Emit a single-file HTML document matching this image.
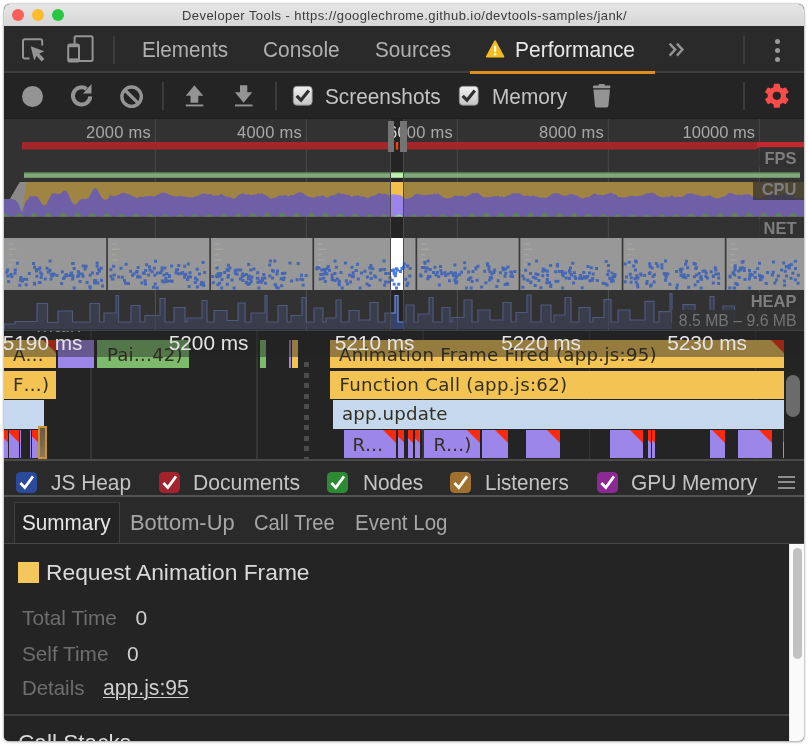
<!DOCTYPE html>
<html><head><meta charset="utf-8"><title>Developer Tools</title>
<style>
html,body{margin:0;padding:0}
body{width:808px;height:746px;background:#fff;overflow:hidden;position:relative}
#win{position:absolute;left:4px;top:4px;width:800px;height:737px;border-radius:6px 6px 5px 5px;overflow:hidden;background:#242424;box-shadow:0 0 2px rgba(0,0,0,.45),0 1px 3px rgba(0,0,0,.25)}
#pg{position:absolute;left:-4px;top:-4px;width:808px;height:746px;will-change:transform}
svg{overflow:visible}
</style></head><body>
<div id="win"><div id="pg">
<div style="position:absolute;left:4px;top:4px;width:800px;height:22px;background:linear-gradient(#e6e6e6,#d6d6d6)"></div>
<div style="position:absolute;left:12px;top:9px;width:12px;height:12px;border-radius:50%;background:#fc5f57"></div>
<div style="position:absolute;left:32px;top:9px;width:12px;height:12px;border-radius:50%;background:#fdbc2e"></div>
<div style="position:absolute;left:52px;top:9px;width:12px;height:12px;border-radius:50%;background:#28c840"></div>
<span id="title" style="position:absolute;left:182px;top:9px;font:13px/1 'Liberation Sans',sans-serif;color:#3c3c3c;white-space:pre;letter-spacing:0.43px">Developer Tools - https://googlechrome.github.io/devtools-samples/jank/</span>
<div style="position:absolute;left:4px;top:26px;width:800px;height:46px;background:#2a2a2a"></div>
<div style="position:absolute;left:4px;top:71px;width:800px;height:2px;background:#3d3d3d"></div>
<span id="t_el" style="position:absolute;left:142px;top:39px;font:22px/1 'Liberation Sans',sans-serif;color:#b0b0b0;white-space:pre;transform:scaleX(0.9382);transform-origin:0 0">Elements</span>
<span id="t_co" style="position:absolute;left:263px;top:39px;font:22px/1 'Liberation Sans',sans-serif;color:#b0b0b0;white-space:pre;transform:scaleX(0.9496);transform-origin:0 0">Console</span>
<span id="t_so" style="position:absolute;left:375px;top:39px;font:22px/1 'Liberation Sans',sans-serif;color:#b0b0b0;white-space:pre;transform:scaleX(0.9421);transform-origin:0 0">Sources</span>
<span id="t_pe" style="position:absolute;left:515px;top:39px;font:22px/1 'Liberation Sans',sans-serif;color:#e8e8e8;white-space:pre;transform:scaleX(0.9530);transform-origin:0 0">Performance</span>
<div style="position:absolute;left:113px;top:36px;width:1.5px;height:28px;background:#3c3c3c"></div>
<div style="position:absolute;left:743px;top:36px;width:1.5px;height:28px;background:#3c3c3c"></div>
<div style="position:absolute;left:774.5px;top:38.5px;width:5.0px;height:5.0px;border-radius:50%;background:#9a9a9a"></div>
<div style="position:absolute;left:774.5px;top:47.5px;width:5.0px;height:5.0px;border-radius:50%;background:#9a9a9a"></div>
<div style="position:absolute;left:774.5px;top:56.5px;width:5.0px;height:5.0px;border-radius:50%;background:#9a9a9a"></div>
<svg style="position:absolute;left:18px;top:32px" width="32" height="34" viewBox="0 0 32 34"><path d="M11.5 26.4 H7 a2 2 0 0 1 -2 -2 V9.2 a2 2 0 0 1 2 -2 H22.2 a2 2 0 0 1 2 2 V13.5" fill="none" stroke="#949494" stroke-width="2"/>
<path d="M12.7 14.2 L26.3 19.3 L21.3 21.6 L26.4 27 L23.6 29.6 L18.6 24.1 L16.2 28.6 Z" fill="#949494"/></svg>
<svg style="position:absolute;left:64px;top:32px" width="34" height="34" viewBox="0 0 34 34"><rect x="10.6" y="4.2" width="18" height="24.8" rx="1.5" fill="none" stroke="#949494" stroke-width="2"/>
<rect x="4.2" y="12.6" width="10.8" height="16.9" rx="1.8" fill="#2a2a2a" stroke="#949494" stroke-width="2"/>
<rect x="4.2" y="12.6" width="10.8" height="2.6" fill="#949494"/><rect x="4.2" y="26.4" width="10.8" height="3" fill="#949494"/></svg>
<svg style="position:absolute;left:484px;top:38px" width="22" height="22" viewBox="0 0 22 22"><path d="M11.1 3.2 L19.4 18.6 H2.8 Z" fill="#f5bd1c" stroke="#f5bd1c" stroke-width="1.8" stroke-linejoin="round"/>
<rect x="10.1" y="7.6" width="2.1" height="6.4" rx="1" fill="#fff"/><circle cx="11.15" cy="16.2" r="1.25" fill="#fff"/></svg>
<svg style="position:absolute;left:666px;top:40px" width="20" height="20" viewBox="0 0 20 20"><path d="M3.6 3.6 L9.2 9.6 L3.6 15.6 M10.9 3.6 L16.5 9.6 L10.9 15.6" fill="none" stroke="#949494" stroke-width="2.4"/></svg>
<div style="position:absolute;left:4px;top:73px;width:800px;height:46px;background:#242424"></div>
<div style="position:absolute;left:4px;top:118px;width:800px;height:1.2px;background:#1e1e1e"></div>
<div style="position:absolute;left:469.5px;top:70.6px;width:185.0px;height:3.4px;background:#dd8e1e"></div>
<div style="position:absolute;left:162px;top:82px;width:1.5px;height:28px;background:#3c3c3c"></div>
<div style="position:absolute;left:275px;top:82px;width:1.5px;height:28px;background:#3c3c3c"></div>
<div style="position:absolute;left:743px;top:82px;width:1.5px;height:28px;background:#3c3c3c"></div>
<div style="position:absolute;left:21.8px;top:85.5px;width:21.4px;height:21.4px;border-radius:50%;background:#949494"></div>
<svg style="position:absolute;left:0;top:0" width="808" height="130" viewBox="0 0 808 130"><path d="M90.24 96.35 A8.65 8.65 0 1 1 86.56 88.81" fill="none" stroke="#949494" stroke-width="4"/><path d="M91.5 84 V93.5 H83 Z" fill="#949494"/></svg>
<svg style="position:absolute;left:118px;top:83px" width="28" height="28" viewBox="0 0 28 28"><circle cx="13.6" cy="13.7" r="9.7" fill="none" stroke="#949494" stroke-width="3.4"/><path d="M6.8 7 L20.4 20.4" stroke="#949494" stroke-width="3.4"/></svg>
<svg style="position:absolute;left:182px;top:82px" width="26" height="28" viewBox="0 0 26 28"><path d="M12.4 3.2 L21.3 13.8 H16.3 V20.7 H8.5 V13.8 H3.8 Z" fill="#949494"/><rect x="3.8" y="22.5" width="17.5" height="1.9" fill="#949494"/></svg>
<svg style="position:absolute;left:231px;top:82px" width="26" height="28" viewBox="0 0 26 28"><path d="M12.6 20.7 L21.3 10.3 H16.3 V3.2 H9 V10.3 H4 Z" fill="#949494"/><rect x="4" y="22.5" width="17.5" height="1.9" fill="#949494"/></svg>
<svg style="position:absolute;left:293px;top:86px" width="20" height="20" viewBox="0 0 20 20"><defs><linearGradient id="g293" x1="0" y1="0" x2="0" y2="1"><stop offset="0" stop-color="#f2f2f2"/><stop offset="1" stop-color="#c4c4c4"/></linearGradient></defs><rect x="0.3" y="0.3" width="18.9" height="18.9" rx="3.6" fill="url(#g293)" stroke="#8a8a8a" stroke-width="0.8"/><path d="M3.6 9.8 L8 14.2 L15.8 4.4" fill="none" stroke="#303030" stroke-width="3.2"/></svg>
<svg style="position:absolute;left:459.2px;top:86px" width="20" height="20" viewBox="0 0 20 20"><defs><linearGradient id="g459" x1="0" y1="0" x2="0" y2="1"><stop offset="0" stop-color="#f2f2f2"/><stop offset="1" stop-color="#c4c4c4"/></linearGradient></defs><rect x="0.3" y="0.3" width="18.9" height="18.9" rx="3.6" fill="url(#g459)" stroke="#8a8a8a" stroke-width="0.8"/><path d="M3.6 9.8 L8 14.2 L15.8 4.4" fill="none" stroke="#303030" stroke-width="3.2"/></svg>
<span id="c_ss" style="position:absolute;left:325px;top:86px;font:22px/1 'Liberation Sans',sans-serif;color:#c4c4c4;white-space:pre;transform:scaleX(0.9455);transform-origin:0 0">Screenshots</span>
<span id="c_me" style="position:absolute;left:491.6px;top:86px;font:22px/1 'Liberation Sans',sans-serif;color:#c4c4c4;white-space:pre;transform:scaleX(0.9457);transform-origin:0 0">Memory</span>
<svg style="position:absolute;left:590px;top:82px" width="24" height="28" viewBox="0 0 24 28"><path d="M3.4 7.4 H20 L18.4 24 a1.6 1.6 0 0 1 -1.6 1.4 H6.6 a1.6 1.6 0 0 1 -1.6 -1.4 Z" fill="#949494"/><rect x="3" y="3.6" width="17.4" height="2.6" rx="1" fill="#949494"/><rect x="8.6" y="2" width="6.2" height="2.4" rx="1" fill="#949494"/></svg>
<svg style="position:absolute;left:762px;top:81px" width="30" height="30" viewBox="0 0 30 30"><path d="M12.26 6.58 L12.52 3.53 L17.08 3.53 L17.34 6.58 L20.64 8.49 L23.42 7.19 L25.70 11.14 L23.19 12.89 L23.19 16.71 L25.70 18.46 L23.42 22.41 L20.64 21.11 L17.34 23.02 L17.08 26.07 L12.52 26.07 L12.26 23.02 L8.96 21.11 L6.18 22.41 L3.90 18.46 L6.41 16.71 L6.41 12.89 L3.90 11.14 L6.18 7.19 L8.96 8.49 Z" fill="#fa4c4c" stroke="#fa4c4c" stroke-width="1.5" stroke-linejoin="round"/><circle cx="14.8" cy="14.8" r="4.1" fill="#242424"/></svg>
<svg style="position:absolute;left:0;top:0" width="808" height="746" viewBox="0 0 808 746"><rect x="0" y="119" width="808" height="211" fill="#323232"/><rect x="154.8" y="119" width="1.2" height="211" fill="#444444"/><rect x="305.8" y="119" width="1.2" height="211" fill="#444444"/><rect x="456.8" y="119" width="1.2" height="211" fill="#444444"/><rect x="607.8" y="119" width="1.2" height="211" fill="#444444"/><rect x="758.8" y="119" width="1.2" height="211" fill="#444444"/><path d="M22 142H760V147L756 149.6H22Z" fill="#a3262b"/><rect x="757" y="142" width="48" height="5.2" fill="#c4282e"/><rect x="24" y="172.7" width="776" height="5.1" fill="#80a87a"/><rect x="24" y="172.5" width="776" height="1.1" fill="#5f8f5a"/><polygon points="4,216.6 4,199.0 6,199.0 8,199.0 10,199.0 12,195.6 14,192.2 16,188.8 18,185.4 20,182.0 22,182.0 24,182.0 26,182.0 28,182.0 30,182.0 32,182.0 34,182.0 36,182.0 38,182.0 40,182.0 42,182.0 44,182.0 46,182.0 48,182.0 50,182.0 52,182.0 54,182.0 56,182.0 58,182.0 60,182.0 62,182.0 64,182.0 66,182.0 68,182.0 70,182.0 72,182.0 74,182.0 76,182.0 78,182.0 80,182.0 82,182.0 84,182.0 86,182.0 88,182.0 90,182.0 92,182.0 94,182.0 96,182.0 98,182.0 100,182.0 102,182.0 104,182.0 106,182.0 108,182.0 110,182.0 112,182.0 114,182.0 116,182.0 118,182.0 120,182.0 122,182.0 124,182.0 126,182.0 128,182.0 130,182.0 132,182.0 134,182.0 136,182.0 138,182.0 140,182.0 142,182.0 144,182.0 146,182.0 148,182.0 150,182.0 152,182.0 154,182.0 156,182.0 158,182.0 160,182.0 162,182.0 164,182.0 166,182.0 168,182.0 170,182.0 172,182.0 174,182.0 176,182.0 178,182.0 180,182.0 182,182.0 184,182.0 186,182.0 188,182.0 190,182.0 192,182.0 194,182.0 196,182.0 198,182.0 200,182.0 202,182.0 204,182.0 206,182.0 208,182.0 210,182.0 212,182.0 214,182.0 216,182.0 218,182.0 220,182.0 222,182.0 224,182.0 226,182.0 228,182.0 230,182.0 232,182.0 234,182.0 236,182.0 238,182.0 240,182.0 242,182.0 244,182.0 246,182.0 248,182.0 250,182.0 252,182.0 254,182.0 256,182.0 258,182.0 260,182.0 262,182.0 264,182.0 266,182.0 268,182.0 270,182.0 272,182.0 274,182.0 276,182.0 278,182.0 280,182.0 282,182.0 284,182.0 286,182.0 288,182.0 290,182.0 292,182.0 294,182.0 296,182.0 298,182.0 300,182.0 302,182.0 304,182.0 306,182.0 308,182.0 310,182.0 312,182.0 314,182.0 316,182.0 318,182.0 320,182.0 322,182.0 324,182.0 326,182.0 328,182.0 330,182.0 332,182.0 334,182.0 336,182.0 338,182.0 340,182.0 342,182.0 344,182.0 346,182.0 348,182.0 350,182.0 352,182.0 354,182.0 356,182.0 358,182.0 360,182.0 362,182.0 364,182.0 366,182.0 368,182.0 370,182.0 372,182.0 374,182.0 376,182.0 378,182.0 380,182.0 382,182.0 384,182.0 386,182.0 388,182.0 390,182.0 392,182.0 394,182.0 396,182.0 398,182.0 400,182.0 402,182.0 404,182.0 406,182.0 408,182.0 410,182.0 412,182.0 414,182.0 416,182.0 418,182.0 420,182.0 422,182.0 424,182.0 426,182.0 428,182.0 430,182.0 432,182.0 434,182.0 436,182.0 438,182.0 440,182.0 442,182.0 444,182.0 446,182.0 448,182.0 450,182.0 452,182.0 454,182.0 456,182.0 458,182.0 460,182.0 462,182.0 464,182.0 466,182.0 468,182.0 470,182.0 472,182.0 474,182.0 476,182.0 478,182.0 480,182.0 482,182.0 484,182.0 486,182.0 488,182.0 490,182.0 492,182.0 494,182.0 496,182.0 498,182.0 500,182.0 502,182.0 504,182.0 506,182.0 508,182.0 510,182.0 512,182.0 514,182.0 516,182.0 518,182.0 520,182.0 522,182.0 524,182.0 526,182.0 528,182.0 530,182.0 532,182.0 534,182.0 536,182.0 538,182.0 540,182.0 542,182.0 544,182.0 546,182.0 548,182.0 550,182.0 552,182.0 554,182.0 556,182.0 558,182.0 560,182.0 562,182.0 564,182.0 566,182.0 568,182.0 570,182.0 572,182.0 574,182.0 576,182.0 578,182.0 580,182.0 582,182.0 584,182.0 586,182.0 588,182.0 590,182.0 592,182.0 594,182.0 596,182.0 598,182.0 600,182.0 602,182.0 604,182.0 606,182.0 608,182.0 610,182.0 612,182.0 614,182.0 616,182.0 618,182.0 620,182.0 622,182.0 624,182.0 626,182.0 628,182.0 630,182.0 632,182.0 634,182.0 636,182.0 638,182.0 640,182.0 642,182.0 644,182.0 646,182.0 648,182.0 650,182.0 652,182.0 654,182.0 656,182.0 658,182.0 660,182.0 662,182.0 664,182.0 666,182.0 668,182.0 670,182.0 672,182.0 674,182.0 676,182.0 678,182.0 680,182.0 682,182.0 684,182.0 686,182.0 688,182.0 690,182.0 692,182.0 694,182.0 696,182.0 698,182.0 700,182.0 702,182.0 704,182.0 706,182.0 708,182.0 710,182.0 712,182.0 714,182.0 716,182.0 718,182.0 720,182.0 722,182.0 724,182.0 726,182.0 728,182.0 730,182.0 732,182.0 734,182.0 736,182.0 738,182.0 740,182.0 742,182.0 744,182.0 746,182.0 748,182.0 750,182.0 752,182.0 754,182.0 756,182.0 758,182.0 760,182.0 762,182.0 764,182.0 766,182.0 768,182.0 770,182.0 772,182.0 774,182.0 776,182.0 778,182.0 780,182.0 782,182.0 784,182.0 786,182.0 788,182.0 790,182.0 792,182.0 794,182.0 796,182.0 798,182.0 800,182.0 802,182.0 804,182.0 804,216.6" fill="#a08542"/><polygon points="10,199.5 14,192 18,185 20,182 26.5,182 24.5,196 22.5,213 20,208 16,200.5" fill="#8a8a8a"/><polygon points="4,216.6 4,199.0 6,199.0 8,199.0 10,199.0 12,199.0 14,199.5 16,200.5 18,203.0 20,208.0 22,213.0 24,206.0 26,201.0 28,199.5 30,195.6 32,196.5 34,196.2 36,196.1 38,197.6 40,200.7 42,204.1 44,205.8 46,204.7 48,201.2 50,196.9 52,193.8 54,192.9 56,193.5 58,194.3 60,193.8 62,192.2 64,190.6 66,190.8 68,193.5 70,198.0 72,202.3 74,204.6 76,204.2 78,201.9 80,199.7 82,198.7 84,199.0 86,199.3 88,198.3 90,195.3 92,191.4 94,188.5 96,188.3 98,190.8 100,194.7 102,198.1 104,199.7 106,199.6 108,199.0 110,195.2 112,195.6 114,196.4 116,195.4 118,194.9 120,194.2 122,192.8 124,193.0 126,193.3 128,194.3 130,194.4 132,195.9 134,196.4 136,198.0 138,197.7 140,196.2 142,197.1 144,196.7 146,196.1 148,196.3 150,196.0 152,196.0 154,196.7 156,195.4 158,194.6 160,193.6 162,192.4 164,192.7 166,192.8 168,194.2 170,194.7 172,195.8 174,196.3 176,196.7 178,196.2 180,195.6 182,196.5 184,196.6 186,196.7 188,197.2 190,197.2 192,197.3 194,197.2 196,196.1 198,196.0 200,194.3 202,194.1 204,192.9 206,194.0 208,194.4 210,193.8 212,194.7 214,196.1 216,195.3 218,195.8 220,194.6 222,194.1 224,195.5 226,196.6 228,196.8 230,197.3 232,198.0 234,198.7 236,197.6 238,195.5 240,194.6 242,193.6 244,193.3 246,194.7 248,194.1 250,195.1 252,195.0 254,194.4 256,194.7 258,193.2 260,193.8 262,193.3 264,194.5 266,195.3 268,196.6 270,198.6 272,198.6 274,197.6 276,197.8 278,195.8 280,195.4 282,195.8 284,195.4 286,194.8 288,196.5 290,195.3 292,195.0 294,195.1 296,193.5 298,192.8 300,192.2 302,192.6 304,194.3 306,194.9 308,196.6 310,197.0 312,197.3 314,197.9 316,196.6 318,196.3 320,196.5 322,195.5 324,195.8 326,197.4 328,197.4 330,196.3 332,195.4 334,195.2 336,194.5 338,192.5 340,193.4 342,193.7 344,194.1 346,194.8 348,195.1 350,195.5 352,197.0 354,195.6 356,196.0 358,195.2 360,196.3 362,196.6 364,196.8 366,197.2 368,198.2 370,196.7 372,196.1 374,195.4 376,194.7 378,193.6 380,192.9 382,194.2 384,193.7 386,194.1 388,194.9 390,195.2 392,194.4 394,194.2 396,194.4 398,194.9 400,194.9 402,196.2 404,198.0 406,198.9 408,198.5 410,198.1 412,197.0 414,195.2 416,194.1 418,193.5 420,194.9 422,194.8 424,195.6 426,194.4 428,195.3 430,194.6 432,194.5 434,193.3 436,194.3 438,193.3 440,195.0 442,196.4 444,197.8 446,198.3 448,198.4 450,198.1 452,197.6 454,195.8 456,195.8 458,195.9 460,196.0 462,195.6 464,196.4 466,196.4 468,195.4 470,194.6 472,193.3 474,193.1 476,193.0 478,192.7 480,194.6 482,196.4 484,197.2 486,197.5 488,197.1 490,197.3 492,196.5 494,195.9 496,196.4 498,195.5 500,197.0 502,196.2 504,197.2 506,196.6 508,195.3 510,194.9 512,193.5 514,193.1 516,193.5 518,192.9 520,193.4 522,194.8 524,196.1 526,195.7 528,195.6 530,196.4 532,195.8 534,195.5 536,196.6 538,196.4 540,197.7 542,197.4 544,197.8 546,197.8 548,196.9 550,195.6 552,193.8 554,193.5 556,193.1 558,193.2 560,194.4 562,195.5 564,195.8 566,195.5 568,195.6 570,194.1 572,193.9 574,194.8 576,195.3 578,196.2 580,197.5 582,198.4 584,198.2 586,197.3 588,197.2 590,196.3 592,194.7 594,193.7 596,193.7 598,195.3 600,194.4 602,195.5 604,195.1 606,194.1 608,194.3 610,192.7 612,192.9 614,194.0 616,194.4 618,196.9 620,197.0 622,197.4 624,197.2 626,197.6 628,196.5 630,196.1 632,195.7 634,195.9 636,196.4 638,196.3 640,195.6 642,195.7 644,194.6 646,193.4 648,193.2 650,193.2 652,192.4 654,193.2 656,194.4 658,196.1 660,196.7 662,197.3 664,197.5 666,196.5 668,196.7 670,196.6 672,195.3 674,197.1 676,197.2 678,196.6 680,197.0 682,196.7 684,196.1 686,194.1 688,193.4 690,193.4 692,193.4 694,194.3 696,194.4 698,195.6 700,195.4 702,196.4 704,196.4 706,195.8 708,195.7 710,195.1 712,196.8 714,197.7 716,198.4 718,198.1 720,198.3 722,196.8 724,196.6 726,195.4 728,193.6 730,192.8 732,193.4 734,194.1 736,195.1 738,195.1 740,194.4 742,195.5 744,193.9 746,194.8 748,193.9 750,194.7 752,196.3 754,196.4 756,197.3 758,198.3 760,198.5 762,197.9 764,196.6 766,196.1 768,194.7 770,195.2 772,194.0 774,194.5 776,195.3 778,194.9 780,195.2 782,194.4 784,193.6 786,193.8 788,193.6 790,194.0 792,195.2 794,197.2 796,198.2 798,197.5 800,198.3 802,197.9 804,196.4 804,216.6" fill="#6f5fa6"/><polygon points="4,216.6 4,213.3 6,213.6 8,215.8 10,216.5 12,216.5 14,216.5 16,215.6 18,213.3 20,213.0 22,214.8 24,216.5 26,216.5 28,216.5 30,216.5 32,213.5 34,212.5 36,213.8 38,216.5 40,216.5 42,216.5 44,216.5 46,214.1 48,212.4 50,213.1 52,216.2 54,216.5 56,216.5 58,216.5 60,215.1 62,212.6 64,212.6 66,214.9 68,216.5 70,216.5 72,216.5 74,216.5 76,213.2 78,212.5 80,214.1 82,216.5 84,216.5 86,216.5 88,216.5 90,214.1 92,212.7 94,213.6 96,216.5 98,216.5 100,216.5 102,216.5 104,215.0 106,213.2 108,213.4 110,215.5 112,216.5 114,216.5 116,216.5 118,216.1 120,213.9 122,213.6 124,214.9 126,216.5 128,216.5 130,216.5 132,216.5 134,214.6 136,213.9 138,214.6 140,216.5 142,216.5 144,216.5 146,216.5 148,215.3 150,214.3 152,214.5 154,216.1 156,216.5 158,216.5 160,216.5 162,216.0 164,214.6 166,214.5 168,215.5 170,216.5 172,216.5 174,216.5 176,216.5 178,214.9 180,214.4 182,215.1 184,216.5 186,216.5 188,216.5 190,216.5 192,215.2 194,214.3 196,214.6 198,216.3 200,216.5 202,216.5 204,216.5 206,215.7 208,214.2 210,214.1 212,215.5 214,216.5 216,216.5 218,216.5 220,216.5 222,214.2 224,213.6 226,214.7 228,216.5 230,216.5 232,216.5 234,216.5 236,214.4 238,213.2 240,213.9 242,216.5 244,216.5 246,216.5 248,216.5 250,215.0 252,213.0 254,213.1 256,215.4 258,216.5 260,216.5 262,216.5 264,215.9 266,213.1 268,212.6 270,214.3 272,216.5 274,216.5 276,216.5 278,216.5 280,213.6 282,212.3 284,213.5 286,216.5 288,216.5 290,216.5 292,216.5 294,214.4 296,212.4 298,212.9 300,215.7 302,216.5 304,216.5 306,216.5 308,215.5 310,212.9 312,212.6 314,214.7 316,216.5 318,216.5 320,216.5 322,216.5 324,213.6 326,212.8 328,214.0 330,216.5 332,216.5 334,216.5 336,216.5 338,214.5 340,213.2 342,213.7 344,216.2 346,216.5 348,216.5 350,216.5 352,215.5 354,213.7 356,213.8 358,215.4 360,216.5 362,216.5 364,216.5 366,216.5 368,214.4 370,213.9 372,215.0 374,216.5 376,216.5 378,216.5 380,216.5 382,215.0 384,214.2 386,214.7 388,216.5 390,216.5 392,216.5 394,216.5 396,215.6 398,214.5 400,214.6 402,215.9 404,216.5 406,216.5 408,216.5 410,216.2 412,214.7 414,214.4 416,215.4 418,216.5 420,216.5 422,216.5 424,216.5 426,214.9 428,214.2 430,214.8 432,216.5 434,216.5 436,216.5 438,216.5 440,215.3 442,214.0 444,214.3 446,216.0 448,216.5 450,216.5 452,216.5 454,215.8 456,213.9 458,213.7 460,215.1 462,216.5 464,216.5 466,216.5 468,216.5 470,214.0 472,213.2 474,214.2 476,216.5 478,216.5 480,216.5 482,216.5 484,214.4 486,212.8 488,213.4 490,216.2 492,216.5 494,216.5 496,216.5 498,215.2 500,212.8 502,212.7 504,215.0 506,216.5 508,216.5 510,216.5 512,216.5 514,213.2 516,212.4 518,214.0 520,216.5 522,216.5 524,216.5 526,216.5 528,213.8 530,212.3 532,213.3 534,216.5 536,216.5 538,216.5 540,216.5 542,214.8 544,212.7 546,212.9 548,215.3 550,216.5 552,216.5 554,216.5 556,216.0 558,213.3 560,212.9 562,214.5 564,216.5 566,216.5 568,216.5 570,216.5 572,214.1 574,213.1 576,214.1 578,216.5 580,216.5 582,216.5 584,216.5 586,215.0 588,213.6 590,214.0 592,215.9 594,216.5 596,216.5 598,216.5 600,215.9 602,214.2 604,214.1 606,215.4 608,216.5 610,216.5 612,216.5 614,216.5 616,214.8 618,214.2 620,215.0 622,216.5 624,216.5 626,216.5 628,216.5 630,215.3 632,214.4 634,214.8 636,216.3 638,216.5 640,216.5 642,216.5 644,215.8 646,214.6 648,214.5 650,215.7 652,216.5 654,216.5 656,216.5 658,216.5 660,214.7 662,214.2 664,215.1 666,216.5 668,216.5 670,216.5 672,216.5 674,214.9 676,213.9 678,214.5 680,216.5 682,216.5 684,216.5 686,216.5 688,215.3 690,213.7 692,213.8 694,215.6 696,216.5 698,216.5 700,216.5 702,216.0 704,213.7 706,213.2 708,214.7 710,216.5 712,216.5 714,216.5 716,216.5 718,213.9 720,212.7 722,213.8 724,216.5 726,216.5 728,216.5 730,216.5 732,214.5 734,212.6 736,213.0 738,215.7 740,216.5 742,216.5 744,216.5 746,215.5 748,212.8 750,212.5 752,214.6 754,216.5 756,216.5 758,216.5 760,216.5 762,213.4 764,212.3 766,213.7 768,216.5 770,216.5 772,216.5 774,216.5 776,214.2 778,212.5 780,213.2 782,216.2 784,216.5 786,216.5 788,216.5 790,215.2 792,213.1 794,213.1 796,215.1 798,216.5 800,216.5 802,216.5 804,216.5 804,216.6" fill="#5f8456"/><rect x="4" y="238" width="800" height="52" fill="#989898"/><path d="M8.6 243.2h5v1.4h-5zM8.6 248.5h8v1.4h-8zM8.6 253.9h4v1.4h-4zM8.6 259.2h7v1.4h-7zM8.6 264.6h3v1.4h-3zM111.7 243.2h5v1.4h-5zM111.7 248.5h8v1.4h-8zM111.7 253.9h4v1.4h-4zM111.7 259.2h7v1.4h-7zM111.7 264.6h3v1.4h-3zM214.8 243.2h5v1.4h-5zM214.8 248.5h8v1.4h-8zM214.8 253.9h4v1.4h-4zM214.8 259.2h7v1.4h-7zM214.8 264.6h3v1.4h-3zM317.9 243.2h5v1.4h-5zM317.9 248.5h8v1.4h-8zM317.9 253.9h4v1.4h-4zM317.9 259.2h7v1.4h-7zM317.9 264.6h3v1.4h-3zM421.0 243.2h5v1.4h-5zM421.0 248.5h8v1.4h-8zM421.0 253.9h4v1.4h-4zM421.0 259.2h7v1.4h-7zM421.0 264.6h3v1.4h-3zM524.1 243.2h5v1.4h-5zM524.1 248.5h8v1.4h-8zM524.1 253.9h4v1.4h-4zM524.1 259.2h7v1.4h-7zM524.1 264.6h3v1.4h-3zM627.2 243.2h5v1.4h-5zM627.2 248.5h8v1.4h-8zM627.2 253.9h4v1.4h-4zM627.2 259.2h7v1.4h-7zM627.2 264.6h3v1.4h-3zM730.3 243.2h5v1.4h-5zM730.3 248.5h8v1.4h-8zM730.3 253.9h4v1.4h-4zM730.3 259.2h7v1.4h-7zM730.3 264.6h3v1.4h-3z" fill="#a6a69e"/><path d="M64.9 272.9h3v3h-3zM95.6 261.4h3v3h-3zM76.1 275.0h3v3h-3zM49.7 272.7h3v3h-3zM95.7 264.8h3v3h-3zM15.9 261.7h3v3h-3zM50.1 273.7h3v3h-3zM60.2 282.0h3v3h-3zM6.3 274.6h3v3h-3zM93.1 278.9h3v3h-3zM78.6 280.0h3v3h-3zM18.3 283.7h3v3h-3zM64.3 273.8h3v3h-3zM88.7 273.8h3v3h-3zM25.1 277.7h3v3h-3zM88.8 286.5h3v3h-3zM32.8 281.7h3v3h-3zM70.1 271.5h3v3h-3zM24.7 283.2h3v3h-3zM97.9 269.7h3v3h-3zM90.9 271.6h3v3h-3zM20.9 279.6h3v3h-3zM19.0 278.8h3v3h-3zM63.0 275.8h3v3h-3zM5.3 270.8h3v3h-3zM34.8 267.9h3v3h-3zM83.7 267.6h3v3h-3zM51.2 274.2h3v3h-3zM72.7 286.5h3v3h-3zM7.2 280.0h3v3h-3zM77.1 274.2h3v3h-3zM80.7 272.4h3v3h-3zM40.2 272.7h3v3h-3zM9.5 273.1h3v3h-3zM22.4 277.8h3v3h-3zM77.6 272.2h3v3h-3zM94.3 279.3h3v3h-3zM39.1 271.3h3v3h-3zM55.4 274.0h3v3h-3zM76.9 270.3h3v3h-3zM81.6 274.7h3v3h-3zM95.9 272.1h3v3h-3zM13.8 268.5h3v3h-3zM93.2 281.4h3v3h-3zM37.7 281.1h3v3h-3zM35.0 269.6h3v3h-3zM35.4 274.7h3v3h-3zM19.3 276.0h3v3h-3zM71.2 277.5h3v3h-3zM9.7 273.4h3v3h-3zM99.8 266.7h3v3h-3zM27.8 272.0h3v3h-3zM62.1 277.0h3v3h-3zM45.5 266.8h3v3h-3zM10.4 275.0h3v3h-3zM52.4 272.6h3v3h-3zM85.6 281.0h3v3h-3zM96.3 281.6h3v3h-3zM65.6 274.3h3v3h-3zM46.8 270.4h3v3h-3zM19.3 276.7h3v3h-3zM48.5 268.8h3v3h-3zM101.0 284.6h3v3h-3zM48.6 259.5h3v3h-3zM51.9 272.5h3v3h-3zM33.0 265.8h3v3h-3zM43.8 277.5h3v3h-3zM100.0 278.8h3v3h-3zM97.2 267.9h3v3h-3zM37.5 267.8h3v3h-3zM13.6 271.8h3v3h-3zM88.4 285.3h3v3h-3zM39.7 276.1h3v3h-3zM71.8 262.1h3v3h-3zM68.8 273.9h3v3h-3zM72.7 267.0h3v3h-3zM32.0 261.9h3v3h-3zM71.4 274.5h3v3h-3zM33.2 282.8h3v3h-3zM60.8 270.2h3v3h-3zM6.1 268.6h3v3h-3zM69.5 272.0h3v3h-3zM49.5 277.5h3v3h-3zM81.7 264.5h3v3h-3zM38.4 266.6h3v3h-3zM84.6 264.7h3v3h-3zM38.6 281.1h3v3h-3zM71.1 262.0h3v3h-3zM201.9 281.4h3v3h-3zM159.0 271.3h3v3h-3zM124.1 281.8h3v3h-3zM154.0 259.8h3v3h-3zM174.5 271.4h3v3h-3zM124.6 262.7h3v3h-3zM183.1 264.7h3v3h-3zM148.5 268.6h3v3h-3zM168.0 275.0h3v3h-3zM177.3 263.9h3v3h-3zM110.8 277.4h3v3h-3zM170.6 279.7h3v3h-3zM129.1 269.7h3v3h-3zM112.1 264.7h3v3h-3zM153.4 273.8h3v3h-3zM120.9 275.7h3v3h-3zM138.6 275.4h3v3h-3zM111.5 277.6h3v3h-3zM152.8 266.7h3v3h-3zM164.8 279.9h3v3h-3zM131.0 273.7h3v3h-3zM147.1 273.4h3v3h-3zM134.9 270.7h3v3h-3zM188.0 275.3h3v3h-3zM144.0 282.6h3v3h-3zM117.2 275.6h3v3h-3zM160.5 268.7h3v3h-3zM200.2 281.1h3v3h-3zM186.8 262.6h3v3h-3zM169.8 279.6h3v3h-3zM143.6 279.2h3v3h-3zM162.3 280.6h3v3h-3zM200.1 282.6h3v3h-3zM141.8 271.6h3v3h-3zM194.0 276.7h3v3h-3zM162.5 273.5h3v3h-3zM167.2 279.6h3v3h-3zM193.8 280.9h3v3h-3zM144.2 269.1h3v3h-3zM136.1 275.5h3v3h-3zM201.6 260.9h3v3h-3zM195.9 285.4h3v3h-3zM165.4 272.3h3v3h-3zM155.8 286.5h3v3h-3zM148.0 265.3h3v3h-3zM155.4 286.5h3v3h-3zM135.6 270.1h3v3h-3zM167.8 274.0h3v3h-3zM150.7 270.3h3v3h-3zM187.6 284.9h3v3h-3zM109.4 268.2h3v3h-3zM198.0 272.4h3v3h-3zM183.2 273.6h3v3h-3zM123.0 278.9h3v3h-3zM203.1 271.0h3v3h-3zM153.7 282.5h3v3h-3zM170.1 264.6h3v3h-3zM119.5 266.7h3v3h-3zM181.2 270.9h3v3h-3zM140.4 281.5h3v3h-3zM136.6 266.0h3v3h-3zM142.8 272.1h3v3h-3zM179.7 271.9h3v3h-3zM132.4 272.5h3v3h-3zM151.9 285.8h3v3h-3zM160.5 266.4h3v3h-3zM109.5 274.8h3v3h-3zM163.4 266.4h3v3h-3zM176.2 268.2h3v3h-3zM195.7 267.7h3v3h-3zM145.1 263.2h3v3h-3zM127.0 281.9h3v3h-3zM136.6 274.7h3v3h-3zM188.5 271.3h3v3h-3zM174.9 268.4h3v3h-3zM183.1 275.8h3v3h-3zM195.6 278.3h3v3h-3zM160.9 279.6h3v3h-3zM155.9 271.6h3v3h-3zM164.4 276.9h3v3h-3zM186.1 278.0h3v3h-3zM186.9 275.5h3v3h-3zM184.2 272.7h3v3h-3zM177.5 272.2h3v3h-3zM202.2 284.1h3v3h-3zM112.8 273.4h3v3h-3zM189.0 275.4h3v3h-3zM199.6 283.1h3v3h-3zM279.7 277.3h3v3h-3zM299.4 277.7h3v3h-3zM225.6 268.1h3v3h-3zM226.7 269.0h3v3h-3zM271.0 276.6h3v3h-3zM247.6 274.4h3v3h-3zM218.1 281.8h3v3h-3zM282.5 276.6h3v3h-3zM295.6 278.3h3v3h-3zM241.4 278.9h3v3h-3zM268.9 259.5h3v3h-3zM247.2 274.6h3v3h-3zM216.6 272.2h3v3h-3zM271.9 269.8h3v3h-3zM259.8 280.8h3v3h-3zM270.9 268.9h3v3h-3zM236.5 268.6h3v3h-3zM283.3 271.8h3v3h-3zM260.9 276.8h3v3h-3zM246.9 277.2h3v3h-3zM282.0 278.1h3v3h-3zM274.1 283.2h3v3h-3zM219.4 272.0h3v3h-3zM223.2 270.9h3v3h-3zM268.3 274.5h3v3h-3zM257.4 286.5h3v3h-3zM242.3 274.0h3v3h-3zM280.9 271.9h3v3h-3zM216.4 283.3h3v3h-3zM276.7 286.5h3v3h-3zM232.6 286.5h3v3h-3zM275.1 285.7h3v3h-3zM290.1 279.6h3v3h-3zM245.2 280.8h3v3h-3zM233.8 268.8h3v3h-3zM244.7 281.6h3v3h-3zM248.3 281.9h3v3h-3zM273.5 283.2h3v3h-3zM288.5 261.4h3v3h-3zM260.9 278.9h3v3h-3zM268.2 263.5h3v3h-3zM249.2 268.5h3v3h-3zM220.5 278.0h3v3h-3zM215.0 274.4h3v3h-3zM296.7 262.1h3v3h-3zM211.2 274.9h3v3h-3zM256.4 280.8h3v3h-3zM252.4 267.5h3v3h-3zM255.9 276.7h3v3h-3zM226.5 275.8h3v3h-3zM247.2 263.0h3v3h-3zM225.8 282.7h3v3h-3zM235.6 272.8h3v3h-3zM238.8 277.5h3v3h-3zM233.8 271.8h3v3h-3zM300.0 273.7h3v3h-3zM246.7 283.1h3v3h-3zM276.0 269.6h3v3h-3zM256.5 276.7h3v3h-3zM275.4 272.4h3v3h-3zM239.2 268.5h3v3h-3zM226.9 263.7h3v3h-3zM230.5 278.4h3v3h-3zM218.7 274.3h3v3h-3zM249.7 279.9h3v3h-3zM241.2 272.4h3v3h-3zM256.2 271.2h3v3h-3zM280.2 284.3h3v3h-3zM226.9 274.1h3v3h-3zM301.6 283.6h3v3h-3zM273.3 259.5h3v3h-3zM211.8 281.3h3v3h-3zM217.0 274.8h3v3h-3zM215.5 266.6h3v3h-3zM263.9 281.7h3v3h-3zM244.8 273.0h3v3h-3zM220.2 286.5h3v3h-3zM258.4 279.8h3v3h-3zM301.1 278.3h3v3h-3zM216.0 275.2h3v3h-3zM249.4 278.4h3v3h-3zM250.4 275.4h3v3h-3zM240.6 275.3h3v3h-3zM304.6 274.1h3v3h-3zM228.4 266.6h3v3h-3zM262.3 273.1h3v3h-3zM219.3 272.2h3v3h-3zM263.3 276.5h3v3h-3zM402.8 262.6h3v3h-3zM334.9 265.7h3v3h-3zM316.0 265.9h3v3h-3zM369.2 271.6h3v3h-3zM350.5 265.8h3v3h-3zM402.0 265.8h3v3h-3zM343.9 261.4h3v3h-3zM335.8 277.5h3v3h-3zM325.4 272.4h3v3h-3zM388.5 276.2h3v3h-3zM393.0 272.1h3v3h-3zM322.2 276.8h3v3h-3zM337.8 279.7h3v3h-3zM369.7 277.1h3v3h-3zM337.9 283.3h3v3h-3zM318.9 277.5h3v3h-3zM333.5 272.0h3v3h-3zM323.8 279.9h3v3h-3zM354.7 269.1h3v3h-3zM367.7 284.0h3v3h-3zM400.4 267.0h3v3h-3zM369.5 264.0h3v3h-3zM356.8 277.5h3v3h-3zM406.1 264.4h3v3h-3zM384.3 271.9h3v3h-3zM392.3 268.4h3v3h-3zM351.0 275.2h3v3h-3zM330.6 275.3h3v3h-3zM339.5 271.0h3v3h-3zM320.4 268.5h3v3h-3zM387.7 272.0h3v3h-3zM319.2 272.9h3v3h-3zM326.8 265.1h3v3h-3zM405.5 284.0h3v3h-3zM373.1 274.4h3v3h-3zM349.1 280.6h3v3h-3zM346.0 282.5h3v3h-3zM393.8 274.2h3v3h-3zM384.1 280.4h3v3h-3zM330.8 278.2h3v3h-3zM382.5 259.5h3v3h-3zM390.7 278.8h3v3h-3zM325.7 267.3h3v3h-3zM358.6 286.5h3v3h-3zM356.0 262.7h3v3h-3zM404.3 277.7h3v3h-3zM365.5 282.5h3v3h-3zM324.3 271.8h3v3h-3zM392.6 271.6h3v3h-3zM408.3 274.6h3v3h-3zM317.5 266.6h3v3h-3zM399.0 269.9h3v3h-3zM352.0 274.7h3v3h-3zM333.6 278.9h3v3h-3zM368.3 266.4h3v3h-3zM337.5 282.4h3v3h-3zM348.1 273.7h3v3h-3zM395.0 286.5h3v3h-3zM396.0 268.4h3v3h-3zM328.0 268.8h3v3h-3zM394.2 271.6h3v3h-3zM330.6 273.6h3v3h-3zM323.8 270.6h3v3h-3zM333.5 259.5h3v3h-3zM390.9 268.9h3v3h-3zM397.2 282.7h3v3h-3zM374.2 275.6h3v3h-3zM315.3 267.2h3v3h-3zM363.5 269.8h3v3h-3zM351.7 271.2h3v3h-3zM344.8 279.3h3v3h-3zM351.1 274.5h3v3h-3zM360.1 271.5h3v3h-3zM408.7 266.9h3v3h-3zM392.7 282.8h3v3h-3zM378.7 268.7h3v3h-3zM365.9 275.4h3v3h-3zM371.3 267.3h3v3h-3zM379.6 268.0h3v3h-3zM321.8 272.7h3v3h-3zM322.7 268.0h3v3h-3zM387.3 280.6h3v3h-3zM383.0 268.0h3v3h-3zM340.7 286.5h3v3h-3zM383.1 283.7h3v3h-3zM378.7 278.5h3v3h-3zM406.3 281.8h3v3h-3zM394.9 267.3h3v3h-3zM488.4 269.9h3v3h-3zM467.1 270.5h3v3h-3zM503.5 274.8h3v3h-3zM469.7 286.5h3v3h-3zM455.2 280.3h3v3h-3zM434.5 273.6h3v3h-3zM480.2 285.6h3v3h-3zM476.4 264.7h3v3h-3zM454.6 281.6h3v3h-3zM470.6 280.1h3v3h-3zM486.1 263.5h3v3h-3zM437.8 283.6h3v3h-3zM446.8 272.4h3v3h-3zM503.6 282.9h3v3h-3zM433.5 265.7h3v3h-3zM439.0 264.9h3v3h-3zM423.4 261.8h3v3h-3zM501.8 268.3h3v3h-3zM487.4 267.3h3v3h-3zM468.2 277.1h3v3h-3zM504.3 271.7h3v3h-3zM475.6 278.7h3v3h-3zM510.3 274.2h3v3h-3zM428.5 275.1h3v3h-3zM471.5 270.0h3v3h-3zM435.7 270.9h3v3h-3zM474.5 267.2h3v3h-3zM487.4 265.2h3v3h-3zM423.3 260.7h3v3h-3zM509.4 274.7h3v3h-3zM448.0 279.3h3v3h-3zM506.5 265.6h3v3h-3zM439.4 269.2h3v3h-3zM463.2 261.2h3v3h-3zM427.1 274.9h3v3h-3zM426.3 277.2h3v3h-3zM432.0 271.1h3v3h-3zM490.3 271.4h3v3h-3zM488.2 278.5h3v3h-3zM485.9 262.3h3v3h-3zM506.2 282.7h3v3h-3zM510.1 271.0h3v3h-3zM427.3 275.5h3v3h-3zM437.2 275.0h3v3h-3zM453.4 263.6h3v3h-3zM488.8 276.1h3v3h-3zM425.5 266.5h3v3h-3zM453.5 278.4h3v3h-3zM428.7 268.1h3v3h-3zM483.1 269.7h3v3h-3zM465.0 286.5h3v3h-3zM424.3 269.7h3v3h-3zM490.4 272.5h3v3h-3zM428.6 267.9h3v3h-3zM463.4 266.7h3v3h-3zM505.7 282.3h3v3h-3zM454.1 271.5h3v3h-3zM484.4 281.2h3v3h-3zM493.2 268.4h3v3h-3zM449.8 270.9h3v3h-3zM498.9 271.3h3v3h-3zM457.8 273.2h3v3h-3zM440.3 272.2h3v3h-3zM443.4 271.2h3v3h-3zM426.6 259.5h3v3h-3zM469.4 276.3h3v3h-3zM454.5 276.2h3v3h-3zM451.6 272.3h3v3h-3zM495.3 285.1h3v3h-3zM452.1 273.9h3v3h-3zM419.0 273.5h3v3h-3zM454.2 281.0h3v3h-3zM467.1 278.0h3v3h-3zM511.0 275.1h3v3h-3zM459.9 270.7h3v3h-3zM444.2 274.0h3v3h-3zM509.2 270.4h3v3h-3zM422.5 266.0h3v3h-3zM455.1 274.8h3v3h-3zM474.4 266.4h3v3h-3zM504.1 267.6h3v3h-3zM420.9 265.9h3v3h-3zM419.7 274.4h3v3h-3zM501.4 266.5h3v3h-3zM496.7 279.2h3v3h-3zM513.4 270.1h3v3h-3zM490.1 276.5h3v3h-3zM492.4 271.1h3v3h-3zM561.1 286.5h3v3h-3zM541.3 269.7h3v3h-3zM561.0 272.5h3v3h-3zM548.0 281.1h3v3h-3zM584.6 276.5h3v3h-3zM564.5 276.4h3v3h-3zM527.6 262.8h3v3h-3zM605.6 283.4h3v3h-3zM539.4 286.2h3v3h-3zM612.8 275.0h3v3h-3zM578.1 276.8h3v3h-3zM608.9 277.3h3v3h-3zM610.6 277.8h3v3h-3zM561.7 274.3h3v3h-3zM546.1 273.7h3v3h-3zM595.0 266.9h3v3h-3zM535.1 259.5h3v3h-3zM588.0 271.4h3v3h-3zM529.2 281.0h3v3h-3zM556.5 279.8h3v3h-3zM555.9 264.6h3v3h-3zM613.3 274.8h3v3h-3zM543.7 268.7h3v3h-3zM572.9 271.3h3v3h-3zM590.8 278.7h3v3h-3zM588.3 279.3h3v3h-3zM521.3 274.4h3v3h-3zM569.0 266.5h3v3h-3zM579.2 274.1h3v3h-3zM568.6 271.3h3v3h-3zM524.2 268.8h3v3h-3zM522.6 277.6h3v3h-3zM549.1 264.1h3v3h-3zM609.4 276.6h3v3h-3zM556.1 262.9h3v3h-3zM610.6 271.5h3v3h-3zM611.8 279.2h3v3h-3zM536.5 273.1h3v3h-3zM610.1 280.1h3v3h-3zM591.2 277.0h3v3h-3zM571.3 261.7h3v3h-3zM549.3 283.4h3v3h-3zM573.5 275.3h3v3h-3zM554.2 270.2h3v3h-3zM568.0 269.3h3v3h-3zM564.1 271.6h3v3h-3zM526.2 278.8h3v3h-3zM534.3 276.8h3v3h-3zM613.5 273.0h3v3h-3zM595.8 278.9h3v3h-3zM591.7 272.5h3v3h-3zM580.6 286.2h3v3h-3zM557.8 270.0h3v3h-3zM545.8 269.8h3v3h-3zM604.7 260.1h3v3h-3zM537.5 279.0h3v3h-3zM533.7 284.1h3v3h-3zM574.4 277.1h3v3h-3zM521.4 285.7h3v3h-3zM568.0 276.9h3v3h-3zM604.2 282.3h3v3h-3zM531.8 275.7h3v3h-3zM589.8 266.3h3v3h-3zM541.8 267.5h3v3h-3zM611.7 275.4h3v3h-3zM586.2 275.1h3v3h-3zM529.4 280.4h3v3h-3zM582.9 276.6h3v3h-3zM606.2 273.0h3v3h-3zM582.3 271.0h3v3h-3zM601.6 281.8h3v3h-3zM545.4 281.3h3v3h-3zM549.2 285.0h3v3h-3zM570.1 273.6h3v3h-3zM607.2 269.6h3v3h-3zM541.3 274.3h3v3h-3zM545.8 277.9h3v3h-3zM529.0 272.0h3v3h-3zM554.4 279.8h3v3h-3zM580.2 276.9h3v3h-3zM583.0 275.2h3v3h-3zM567.7 276.8h3v3h-3zM586.5 265.1h3v3h-3zM608.2 276.4h3v3h-3zM534.4 272.6h3v3h-3zM572.0 281.4h3v3h-3zM607.0 264.1h3v3h-3zM560.8 270.1h3v3h-3zM699.0 276.4h3v3h-3zM634.0 268.6h3v3h-3zM648.5 264.6h3v3h-3zM649.0 284.6h3v3h-3zM684.1 262.7h3v3h-3zM634.8 260.4h3v3h-3zM697.6 271.9h3v3h-3zM684.3 276.2h3v3h-3zM704.7 271.6h3v3h-3zM717.0 272.4h3v3h-3zM660.5 266.4h3v3h-3zM648.7 265.3h3v3h-3zM662.8 272.0h3v3h-3zM629.8 276.2h3v3h-3zM692.5 261.9h3v3h-3zM629.6 280.8h3v3h-3zM652.6 280.4h3v3h-3zM699.6 286.5h3v3h-3zM709.7 270.3h3v3h-3zM663.6 273.4h3v3h-3zM645.3 282.1h3v3h-3zM651.5 275.0h3v3h-3zM634.0 259.5h3v3h-3zM714.5 272.4h3v3h-3zM668.4 282.8h3v3h-3zM634.6 280.5h3v3h-3zM675.2 286.5h3v3h-3zM675.8 283.6h3v3h-3zM665.6 272.3h3v3h-3zM717.1 282.0h3v3h-3zM664.7 275.6h3v3h-3zM711.8 281.4h3v3h-3zM660.3 263.3h3v3h-3zM654.9 262.1h3v3h-3zM701.5 269.8h3v3h-3zM628.7 272.8h3v3h-3zM713.8 266.3h3v3h-3zM711.8 275.1h3v3h-3zM678.8 267.9h3v3h-3zM695.1 273.5h3v3h-3zM648.2 262.2h3v3h-3zM681.7 275.6h3v3h-3zM636.5 276.6h3v3h-3zM693.7 283.5h3v3h-3zM633.5 277.1h3v3h-3zM639.7 273.4h3v3h-3zM632.2 264.6h3v3h-3zM706.0 276.6h3v3h-3zM639.3 272.5h3v3h-3zM679.4 270.5h3v3h-3zM647.8 272.1h3v3h-3zM692.9 275.3h3v3h-3zM635.4 274.0h3v3h-3zM680.5 267.4h3v3h-3zM685.0 259.7h3v3h-3zM712.0 274.5h3v3h-3zM650.7 266.5h3v3h-3zM636.4 285.5h3v3h-3zM664.0 259.5h3v3h-3zM635.9 283.0h3v3h-3zM686.6 274.0h3v3h-3zM623.7 262.5h3v3h-3zM714.3 268.4h3v3h-3zM687.2 285.8h3v3h-3zM664.0 278.8h3v3h-3zM656.3 264.8h3v3h-3zM693.9 262.8h3v3h-3zM682.6 273.2h3v3h-3zM700.1 277.8h3v3h-3zM623.7 280.2h3v3h-3zM699.6 275.2h3v3h-3zM627.7 260.7h3v3h-3zM675.0 270.1h3v3h-3zM643.1 274.0h3v3h-3zM717.2 276.5h3v3h-3zM703.3 269.5h3v3h-3zM686.2 266.2h3v3h-3zM645.6 280.0h3v3h-3zM649.9 283.4h3v3h-3zM679.5 274.1h3v3h-3zM695.0 266.2h3v3h-3zM653.0 273.3h3v3h-3zM694.3 267.1h3v3h-3zM696.4 280.1h3v3h-3zM666.3 272.6h3v3h-3zM648.6 271.3h3v3h-3zM704.4 274.9h3v3h-3zM625.0 275.4h3v3h-3zM782.9 279.4h3v3h-3zM758.8 278.2h3v3h-3zM785.6 265.3h3v3h-3zM728.5 274.7h3v3h-3zM785.0 274.5h3v3h-3zM787.9 264.1h3v3h-3zM771.7 270.7h3v3h-3zM772.0 260.5h3v3h-3zM728.2 286.5h3v3h-3zM741.5 259.9h3v3h-3zM731.5 271.8h3v3h-3zM753.8 276.1h3v3h-3zM733.2 273.6h3v3h-3zM758.1 274.0h3v3h-3zM748.7 272.6h3v3h-3zM738.9 266.8h3v3h-3zM796.6 281.7h3v3h-3zM742.6 267.1h3v3h-3zM756.2 266.9h3v3h-3zM728.6 275.6h3v3h-3zM760.1 274.7h3v3h-3zM789.8 263.1h3v3h-3zM776.8 274.6h3v3h-3zM793.9 259.8h3v3h-3zM784.8 264.9h3v3h-3zM775.0 278.5h3v3h-3zM791.4 271.8h3v3h-3zM740.7 266.3h3v3h-3zM750.7 273.5h3v3h-3zM783.1 283.8h3v3h-3zM740.8 260.8h3v3h-3zM753.5 270.8h3v3h-3zM733.6 268.4h3v3h-3zM737.2 269.5h3v3h-3zM747.8 277.4h3v3h-3zM757.9 273.7h3v3h-3zM734.4 282.1h3v3h-3zM796.9 273.8h3v3h-3zM787.8 266.4h3v3h-3zM732.6 286.5h3v3h-3zM737.7 275.9h3v3h-3zM770.8 273.6h3v3h-3zM782.2 261.4h3v3h-3zM759.8 275.2h3v3h-3zM794.0 266.9h3v3h-3zM739.2 268.2h3v3h-3zM758.0 261.7h3v3h-3zM743.5 278.1h3v3h-3zM748.3 274.6h3v3h-3zM766.1 271.1h3v3h-3zM742.8 268.9h3v3h-3zM733.6 265.6h3v3h-3zM780.2 268.5h3v3h-3zM789.5 276.8h3v3h-3zM783.8 269.8h3v3h-3zM735.8 283.0h3v3h-3zM764.7 282.0h3v3h-3zM793.8 278.3h3v3h-3zM773.3 281.4h3v3h-3zM761.1 275.6h3v3h-3zM759.2 276.7h3v3h-3zM759.6 278.0h3v3h-3zM731.9 271.2h3v3h-3zM748.0 269.0h3v3h-3zM733.4 268.4h3v3h-3zM748.1 286.5h3v3h-3zM733.7 264.2h3v3h-3zM733.1 286.5h3v3h-3z" fill="#4667b4"/><rect x="106.2" y="238" width="1.7" height="52" fill="#3a3a3a"/><rect x="209.3" y="238" width="1.7" height="52" fill="#3a3a3a"/><rect x="312.4" y="238" width="1.7" height="52" fill="#3a3a3a"/><rect x="415.5" y="238" width="1.7" height="52" fill="#3a3a3a"/><rect x="518.6" y="238" width="1.7" height="52" fill="#3a3a3a"/><rect x="621.7" y="238" width="1.7" height="52" fill="#3a3a3a"/><rect x="724.8" y="238" width="1.7" height="52" fill="#3a3a3a"/><path d="M4 329.5V324H15V321.5H37V303.5H47.5V322.5H58V311H72.5V322H90V303.5H99.5V322H104V313H116V295.5H118.5V322H131V305.5H140V322H145V315.5H160V298.5H165V322H174V307.5H185V322H187V318H202V300.5H207V322H214V310.5H227V320.5H238V303H245V322H251V313H265V295.5H267V322H278V305.5H287V322H291V315.5H302V297.5H306V322H314V308H323V322H326V318H336V300H341V322H349V310.5H359V320H370V302.5H378V322H385V313H395V295.5H398V322H406V305H414V322H418V314H429V297.5H433V322H442V307.5H450V322H452V317.5H464V300H472V322H478V310H490V320H503V302.5H511V322H516V312.5H527V295H531V322H541V305H551V322H554V315H565V297.5H571V322H579V307.5H590V322H593V317.5H604V299.6H611V322H618V310H630V320H645V301.4H654V322H659V311.7H670V293.7H672V322H683V304.7H695V322H710V296.5H714V322H723V306H734.5V329H4Z" fill="#3a3d4b"/><path d="M4 329.5V324H15V321.5H37V303.5H47.5V322.5H58V311H72.5V322H90V303.5H99.5V322H104V313H116V295.5H118.5V322H131V305.5H140V322H145V315.5H160V298.5H165V322H174V307.5H185V322H187V318H202V300.5H207V322H214V310.5H227V320.5H238V303H245V322H251V313H265V295.5H267V322H278V305.5H287V322H291V315.5H302V297.5H306V322H314V308H323V322H326V318H336V300H341V322H349V310.5H359V320H370V302.5H378V322H385V313H395V295.5H398V322H406V305H414V322H418V314H429V297.5H433V322H442V307.5H450V322H452V317.5H464V300H472V322H478V310H490V320H503V302.5H511V322H516V312.5H527V295H531V322H541V305H551V322H554V315H565V297.5H571V322H579V307.5H590V322H593V317.5H604V299.6H611V322H618V310H630V320H645V301.4H654V322H659V311.7H670V293.7H672V322H683V304.7H695V322H710V296.5H714V322H723V306H734.5V329" fill="none" stroke="#4f597c" stroke-width="1.2"/></svg>
<div style="position:absolute;left:154.8px;top:290px;width:1.2px;height:40px;background:rgba(255,255,255,0.05)"></div>
<span id="ov0" style="position:absolute;right:657.0px;top:124px;font:16.5px/1 'Liberation Sans',sans-serif;color:#a8a8a8;white-space:pre;letter-spacing:0.25px">2000 ms</span>
<div style="position:absolute;left:305.8px;top:290px;width:1.2px;height:40px;background:rgba(255,255,255,0.05)"></div>
<span id="ov1" style="position:absolute;right:506.0px;top:124px;font:16.5px/1 'Liberation Sans',sans-serif;color:#a8a8a8;white-space:pre;letter-spacing:0.25px">4000 ms</span>
<div style="position:absolute;left:456.8px;top:290px;width:1.2px;height:40px;background:rgba(255,255,255,0.05)"></div>
<span id="ov2" style="position:absolute;right:355.0px;top:124px;font:16.5px/1 'Liberation Sans',sans-serif;color:#a8a8a8;white-space:pre;letter-spacing:0.25px">6000 ms</span>
<div style="position:absolute;left:607.8px;top:290px;width:1.2px;height:40px;background:rgba(255,255,255,0.05)"></div>
<span id="ov3" style="position:absolute;right:204.0px;top:124px;font:16.5px/1 'Liberation Sans',sans-serif;color:#a8a8a8;white-space:pre;letter-spacing:0.25px">8000 ms</span>
<div style="position:absolute;left:758.8px;top:290px;width:1.2px;height:40px;background:rgba(255,255,255,0.05)"></div>
<span id="ov4" style="position:absolute;right:53.0px;top:124px;font:16.5px/1 'Liberation Sans',sans-serif;color:#a8a8a8;white-space:pre;">10000 ms</span>
<div style="position:absolute;left:759px;top:150.5px;width:45px;height:16.5px;background:rgba(50,50,50,0.75)"></div>
<div style="position:absolute;left:752.5px;top:181.5px;width:51.5px;height:18.5px;background:rgba(50,50,50,0.75)"></div>
<div style="position:absolute;left:752.5px;top:219px;width:51.5px;height:18.5px;background:rgba(50,50,50,0.75)"></div>
<div style="position:absolute;left:742px;top:292px;width:62px;height:18px;background:rgba(50,50,50,0.75)"></div>
<div style="position:absolute;left:672px;top:310px;width:132px;height:19.5px;background:rgba(50,50,50,0.85)"></div>
<span id="l_fps" style="position:absolute;right:11.5px;top:149.5px;font:16.5px/1 'Liberation Sans',sans-serif;color:#7e7e7e;white-space:pre;font-weight:bold">FPS</span>
<span id="l_cpu" style="position:absolute;right:11.5px;top:181.2px;font:16.5px/1 'Liberation Sans',sans-serif;color:#7e7e7e;white-space:pre;font-weight:bold">CPU</span>
<span id="l_net" style="position:absolute;right:11.5px;top:219.7px;font:16.5px/1 'Liberation Sans',sans-serif;color:#7e7e7e;white-space:pre;font-weight:bold">NET</span>
<span id="l_heap" style="position:absolute;right:11.5px;top:293px;font:16.5px/1 'Liberation Sans',sans-serif;color:#7e7e7e;white-space:pre;font-weight:bold">HEAP</span>
<span id="l_mb" style="position:absolute;right:11.5px;top:312.8px;font:15.8px/1 'Liberation Sans',sans-serif;color:#757575;white-space:pre;">8.5 MB – 9.6 MB</span>
<div style="position:absolute;left:391px;top:119px;width:12px;height:211px;overflow:hidden"><svg style="position:absolute;left:-391px;top:-119px" width="808" height="746" viewBox="0 0 808 746"><rect x="0" y="119" width="808" height="211" fill="#242424"/><rect x="154.8" y="119" width="1.2" height="211" fill="#242424"/><rect x="305.8" y="119" width="1.2" height="211" fill="#242424"/><rect x="456.8" y="119" width="1.2" height="211" fill="#242424"/><rect x="607.8" y="119" width="1.2" height="211" fill="#242424"/><rect x="758.8" y="119" width="1.2" height="211" fill="#242424"/><path d="M22 142H760V147L756 149.6H22Z" fill="none"/><rect x="757" y="142" width="48" height="5.2" fill="none"/><rect x="24" y="172.7" width="776" height="5.1" fill="#c0f0b4"/><rect x="24" y="172.5" width="776" height="1.1" fill="#8fdc82"/><polygon points="4,216.6 4,199.0 6,199.0 8,199.0 10,199.0 12,195.6 14,192.2 16,188.8 18,185.4 20,182.0 22,182.0 24,182.0 26,182.0 28,182.0 30,182.0 32,182.0 34,182.0 36,182.0 38,182.0 40,182.0 42,182.0 44,182.0 46,182.0 48,182.0 50,182.0 52,182.0 54,182.0 56,182.0 58,182.0 60,182.0 62,182.0 64,182.0 66,182.0 68,182.0 70,182.0 72,182.0 74,182.0 76,182.0 78,182.0 80,182.0 82,182.0 84,182.0 86,182.0 88,182.0 90,182.0 92,182.0 94,182.0 96,182.0 98,182.0 100,182.0 102,182.0 104,182.0 106,182.0 108,182.0 110,182.0 112,182.0 114,182.0 116,182.0 118,182.0 120,182.0 122,182.0 124,182.0 126,182.0 128,182.0 130,182.0 132,182.0 134,182.0 136,182.0 138,182.0 140,182.0 142,182.0 144,182.0 146,182.0 148,182.0 150,182.0 152,182.0 154,182.0 156,182.0 158,182.0 160,182.0 162,182.0 164,182.0 166,182.0 168,182.0 170,182.0 172,182.0 174,182.0 176,182.0 178,182.0 180,182.0 182,182.0 184,182.0 186,182.0 188,182.0 190,182.0 192,182.0 194,182.0 196,182.0 198,182.0 200,182.0 202,182.0 204,182.0 206,182.0 208,182.0 210,182.0 212,182.0 214,182.0 216,182.0 218,182.0 220,182.0 222,182.0 224,182.0 226,182.0 228,182.0 230,182.0 232,182.0 234,182.0 236,182.0 238,182.0 240,182.0 242,182.0 244,182.0 246,182.0 248,182.0 250,182.0 252,182.0 254,182.0 256,182.0 258,182.0 260,182.0 262,182.0 264,182.0 266,182.0 268,182.0 270,182.0 272,182.0 274,182.0 276,182.0 278,182.0 280,182.0 282,182.0 284,182.0 286,182.0 288,182.0 290,182.0 292,182.0 294,182.0 296,182.0 298,182.0 300,182.0 302,182.0 304,182.0 306,182.0 308,182.0 310,182.0 312,182.0 314,182.0 316,182.0 318,182.0 320,182.0 322,182.0 324,182.0 326,182.0 328,182.0 330,182.0 332,182.0 334,182.0 336,182.0 338,182.0 340,182.0 342,182.0 344,182.0 346,182.0 348,182.0 350,182.0 352,182.0 354,182.0 356,182.0 358,182.0 360,182.0 362,182.0 364,182.0 366,182.0 368,182.0 370,182.0 372,182.0 374,182.0 376,182.0 378,182.0 380,182.0 382,182.0 384,182.0 386,182.0 388,182.0 390,182.0 392,182.0 394,182.0 396,182.0 398,182.0 400,182.0 402,182.0 404,182.0 406,182.0 408,182.0 410,182.0 412,182.0 414,182.0 416,182.0 418,182.0 420,182.0 422,182.0 424,182.0 426,182.0 428,182.0 430,182.0 432,182.0 434,182.0 436,182.0 438,182.0 440,182.0 442,182.0 444,182.0 446,182.0 448,182.0 450,182.0 452,182.0 454,182.0 456,182.0 458,182.0 460,182.0 462,182.0 464,182.0 466,182.0 468,182.0 470,182.0 472,182.0 474,182.0 476,182.0 478,182.0 480,182.0 482,182.0 484,182.0 486,182.0 488,182.0 490,182.0 492,182.0 494,182.0 496,182.0 498,182.0 500,182.0 502,182.0 504,182.0 506,182.0 508,182.0 510,182.0 512,182.0 514,182.0 516,182.0 518,182.0 520,182.0 522,182.0 524,182.0 526,182.0 528,182.0 530,182.0 532,182.0 534,182.0 536,182.0 538,182.0 540,182.0 542,182.0 544,182.0 546,182.0 548,182.0 550,182.0 552,182.0 554,182.0 556,182.0 558,182.0 560,182.0 562,182.0 564,182.0 566,182.0 568,182.0 570,182.0 572,182.0 574,182.0 576,182.0 578,182.0 580,182.0 582,182.0 584,182.0 586,182.0 588,182.0 590,182.0 592,182.0 594,182.0 596,182.0 598,182.0 600,182.0 602,182.0 604,182.0 606,182.0 608,182.0 610,182.0 612,182.0 614,182.0 616,182.0 618,182.0 620,182.0 622,182.0 624,182.0 626,182.0 628,182.0 630,182.0 632,182.0 634,182.0 636,182.0 638,182.0 640,182.0 642,182.0 644,182.0 646,182.0 648,182.0 650,182.0 652,182.0 654,182.0 656,182.0 658,182.0 660,182.0 662,182.0 664,182.0 666,182.0 668,182.0 670,182.0 672,182.0 674,182.0 676,182.0 678,182.0 680,182.0 682,182.0 684,182.0 686,182.0 688,182.0 690,182.0 692,182.0 694,182.0 696,182.0 698,182.0 700,182.0 702,182.0 704,182.0 706,182.0 708,182.0 710,182.0 712,182.0 714,182.0 716,182.0 718,182.0 720,182.0 722,182.0 724,182.0 726,182.0 728,182.0 730,182.0 732,182.0 734,182.0 736,182.0 738,182.0 740,182.0 742,182.0 744,182.0 746,182.0 748,182.0 750,182.0 752,182.0 754,182.0 756,182.0 758,182.0 760,182.0 762,182.0 764,182.0 766,182.0 768,182.0 770,182.0 772,182.0 774,182.0 776,182.0 778,182.0 780,182.0 782,182.0 784,182.0 786,182.0 788,182.0 790,182.0 792,182.0 794,182.0 796,182.0 798,182.0 800,182.0 802,182.0 804,182.0 804,216.6" fill="#f3c14b"/><polygon points="10,199.5 14,192 18,185 20,182 26.5,182 24.5,196 22.5,213 20,208 16,200.5" fill="#ccc"/><polygon points="4,216.6 4,199.0 6,199.0 8,199.0 10,199.0 12,199.0 14,199.5 16,200.5 18,203.0 20,208.0 22,213.0 24,206.0 26,201.0 28,199.5 30,195.6 32,196.5 34,196.2 36,196.1 38,197.6 40,200.7 42,204.1 44,205.8 46,204.7 48,201.2 50,196.9 52,193.8 54,192.9 56,193.5 58,194.3 60,193.8 62,192.2 64,190.6 66,190.8 68,193.5 70,198.0 72,202.3 74,204.6 76,204.2 78,201.9 80,199.7 82,198.7 84,199.0 86,199.3 88,198.3 90,195.3 92,191.4 94,188.5 96,188.3 98,190.8 100,194.7 102,198.1 104,199.7 106,199.6 108,199.0 110,195.2 112,195.6 114,196.4 116,195.4 118,194.9 120,194.2 122,192.8 124,193.0 126,193.3 128,194.3 130,194.4 132,195.9 134,196.4 136,198.0 138,197.7 140,196.2 142,197.1 144,196.7 146,196.1 148,196.3 150,196.0 152,196.0 154,196.7 156,195.4 158,194.6 160,193.6 162,192.4 164,192.7 166,192.8 168,194.2 170,194.7 172,195.8 174,196.3 176,196.7 178,196.2 180,195.6 182,196.5 184,196.6 186,196.7 188,197.2 190,197.2 192,197.3 194,197.2 196,196.1 198,196.0 200,194.3 202,194.1 204,192.9 206,194.0 208,194.4 210,193.8 212,194.7 214,196.1 216,195.3 218,195.8 220,194.6 222,194.1 224,195.5 226,196.6 228,196.8 230,197.3 232,198.0 234,198.7 236,197.6 238,195.5 240,194.6 242,193.6 244,193.3 246,194.7 248,194.1 250,195.1 252,195.0 254,194.4 256,194.7 258,193.2 260,193.8 262,193.3 264,194.5 266,195.3 268,196.6 270,198.6 272,198.6 274,197.6 276,197.8 278,195.8 280,195.4 282,195.8 284,195.4 286,194.8 288,196.5 290,195.3 292,195.0 294,195.1 296,193.5 298,192.8 300,192.2 302,192.6 304,194.3 306,194.9 308,196.6 310,197.0 312,197.3 314,197.9 316,196.6 318,196.3 320,196.5 322,195.5 324,195.8 326,197.4 328,197.4 330,196.3 332,195.4 334,195.2 336,194.5 338,192.5 340,193.4 342,193.7 344,194.1 346,194.8 348,195.1 350,195.5 352,197.0 354,195.6 356,196.0 358,195.2 360,196.3 362,196.6 364,196.8 366,197.2 368,198.2 370,196.7 372,196.1 374,195.4 376,194.7 378,193.6 380,192.9 382,194.2 384,193.7 386,194.1 388,194.9 390,195.2 392,194.4 394,194.2 396,194.4 398,194.9 400,194.9 402,196.2 404,198.0 406,198.9 408,198.5 410,198.1 412,197.0 414,195.2 416,194.1 418,193.5 420,194.9 422,194.8 424,195.6 426,194.4 428,195.3 430,194.6 432,194.5 434,193.3 436,194.3 438,193.3 440,195.0 442,196.4 444,197.8 446,198.3 448,198.4 450,198.1 452,197.6 454,195.8 456,195.8 458,195.9 460,196.0 462,195.6 464,196.4 466,196.4 468,195.4 470,194.6 472,193.3 474,193.1 476,193.0 478,192.7 480,194.6 482,196.4 484,197.2 486,197.5 488,197.1 490,197.3 492,196.5 494,195.9 496,196.4 498,195.5 500,197.0 502,196.2 504,197.2 506,196.6 508,195.3 510,194.9 512,193.5 514,193.1 516,193.5 518,192.9 520,193.4 522,194.8 524,196.1 526,195.7 528,195.6 530,196.4 532,195.8 534,195.5 536,196.6 538,196.4 540,197.7 542,197.4 544,197.8 546,197.8 548,196.9 550,195.6 552,193.8 554,193.5 556,193.1 558,193.2 560,194.4 562,195.5 564,195.8 566,195.5 568,195.6 570,194.1 572,193.9 574,194.8 576,195.3 578,196.2 580,197.5 582,198.4 584,198.2 586,197.3 588,197.2 590,196.3 592,194.7 594,193.7 596,193.7 598,195.3 600,194.4 602,195.5 604,195.1 606,194.1 608,194.3 610,192.7 612,192.9 614,194.0 616,194.4 618,196.9 620,197.0 622,197.4 624,197.2 626,197.6 628,196.5 630,196.1 632,195.7 634,195.9 636,196.4 638,196.3 640,195.6 642,195.7 644,194.6 646,193.4 648,193.2 650,193.2 652,192.4 654,193.2 656,194.4 658,196.1 660,196.7 662,197.3 664,197.5 666,196.5 668,196.7 670,196.6 672,195.3 674,197.1 676,197.2 678,196.6 680,197.0 682,196.7 684,196.1 686,194.1 688,193.4 690,193.4 692,193.4 694,194.3 696,194.4 698,195.6 700,195.4 702,196.4 704,196.4 706,195.8 708,195.7 710,195.1 712,196.8 714,197.7 716,198.4 718,198.1 720,198.3 722,196.8 724,196.6 726,195.4 728,193.6 730,192.8 732,193.4 734,194.1 736,195.1 738,195.1 740,194.4 742,195.5 744,193.9 746,194.8 748,193.9 750,194.7 752,196.3 754,196.4 756,197.3 758,198.3 760,198.5 762,197.9 764,196.6 766,196.1 768,194.7 770,195.2 772,194.0 774,194.5 776,195.3 778,194.9 780,195.2 782,194.4 784,193.6 786,193.8 788,193.6 790,194.0 792,195.2 794,197.2 796,198.2 798,197.5 800,198.3 802,197.9 804,196.4 804,216.6" fill="#9a84e8"/><polygon points="4,216.6 4,213.3 6,213.6 8,215.8 10,216.5 12,216.5 14,216.5 16,215.6 18,213.3 20,213.0 22,214.8 24,216.5 26,216.5 28,216.5 30,216.5 32,213.5 34,212.5 36,213.8 38,216.5 40,216.5 42,216.5 44,216.5 46,214.1 48,212.4 50,213.1 52,216.2 54,216.5 56,216.5 58,216.5 60,215.1 62,212.6 64,212.6 66,214.9 68,216.5 70,216.5 72,216.5 74,216.5 76,213.2 78,212.5 80,214.1 82,216.5 84,216.5 86,216.5 88,216.5 90,214.1 92,212.7 94,213.6 96,216.5 98,216.5 100,216.5 102,216.5 104,215.0 106,213.2 108,213.4 110,215.5 112,216.5 114,216.5 116,216.5 118,216.1 120,213.9 122,213.6 124,214.9 126,216.5 128,216.5 130,216.5 132,216.5 134,214.6 136,213.9 138,214.6 140,216.5 142,216.5 144,216.5 146,216.5 148,215.3 150,214.3 152,214.5 154,216.1 156,216.5 158,216.5 160,216.5 162,216.0 164,214.6 166,214.5 168,215.5 170,216.5 172,216.5 174,216.5 176,216.5 178,214.9 180,214.4 182,215.1 184,216.5 186,216.5 188,216.5 190,216.5 192,215.2 194,214.3 196,214.6 198,216.3 200,216.5 202,216.5 204,216.5 206,215.7 208,214.2 210,214.1 212,215.5 214,216.5 216,216.5 218,216.5 220,216.5 222,214.2 224,213.6 226,214.7 228,216.5 230,216.5 232,216.5 234,216.5 236,214.4 238,213.2 240,213.9 242,216.5 244,216.5 246,216.5 248,216.5 250,215.0 252,213.0 254,213.1 256,215.4 258,216.5 260,216.5 262,216.5 264,215.9 266,213.1 268,212.6 270,214.3 272,216.5 274,216.5 276,216.5 278,216.5 280,213.6 282,212.3 284,213.5 286,216.5 288,216.5 290,216.5 292,216.5 294,214.4 296,212.4 298,212.9 300,215.7 302,216.5 304,216.5 306,216.5 308,215.5 310,212.9 312,212.6 314,214.7 316,216.5 318,216.5 320,216.5 322,216.5 324,213.6 326,212.8 328,214.0 330,216.5 332,216.5 334,216.5 336,216.5 338,214.5 340,213.2 342,213.7 344,216.2 346,216.5 348,216.5 350,216.5 352,215.5 354,213.7 356,213.8 358,215.4 360,216.5 362,216.5 364,216.5 366,216.5 368,214.4 370,213.9 372,215.0 374,216.5 376,216.5 378,216.5 380,216.5 382,215.0 384,214.2 386,214.7 388,216.5 390,216.5 392,216.5 394,216.5 396,215.6 398,214.5 400,214.6 402,215.9 404,216.5 406,216.5 408,216.5 410,216.2 412,214.7 414,214.4 416,215.4 418,216.5 420,216.5 422,216.5 424,216.5 426,214.9 428,214.2 430,214.8 432,216.5 434,216.5 436,216.5 438,216.5 440,215.3 442,214.0 444,214.3 446,216.0 448,216.5 450,216.5 452,216.5 454,215.8 456,213.9 458,213.7 460,215.1 462,216.5 464,216.5 466,216.5 468,216.5 470,214.0 472,213.2 474,214.2 476,216.5 478,216.5 480,216.5 482,216.5 484,214.4 486,212.8 488,213.4 490,216.2 492,216.5 494,216.5 496,216.5 498,215.2 500,212.8 502,212.7 504,215.0 506,216.5 508,216.5 510,216.5 512,216.5 514,213.2 516,212.4 518,214.0 520,216.5 522,216.5 524,216.5 526,216.5 528,213.8 530,212.3 532,213.3 534,216.5 536,216.5 538,216.5 540,216.5 542,214.8 544,212.7 546,212.9 548,215.3 550,216.5 552,216.5 554,216.5 556,216.0 558,213.3 560,212.9 562,214.5 564,216.5 566,216.5 568,216.5 570,216.5 572,214.1 574,213.1 576,214.1 578,216.5 580,216.5 582,216.5 584,216.5 586,215.0 588,213.6 590,214.0 592,215.9 594,216.5 596,216.5 598,216.5 600,215.9 602,214.2 604,214.1 606,215.4 608,216.5 610,216.5 612,216.5 614,216.5 616,214.8 618,214.2 620,215.0 622,216.5 624,216.5 626,216.5 628,216.5 630,215.3 632,214.4 634,214.8 636,216.3 638,216.5 640,216.5 642,216.5 644,215.8 646,214.6 648,214.5 650,215.7 652,216.5 654,216.5 656,216.5 658,216.5 660,214.7 662,214.2 664,215.1 666,216.5 668,216.5 670,216.5 672,216.5 674,214.9 676,213.9 678,214.5 680,216.5 682,216.5 684,216.5 686,216.5 688,215.3 690,213.7 692,213.8 694,215.6 696,216.5 698,216.5 700,216.5 702,216.0 704,213.7 706,213.2 708,214.7 710,216.5 712,216.5 714,216.5 716,216.5 718,213.9 720,212.7 722,213.8 724,216.5 726,216.5 728,216.5 730,216.5 732,214.5 734,212.6 736,213.0 738,215.7 740,216.5 742,216.5 744,216.5 746,215.5 748,212.8 750,212.5 752,214.6 754,216.5 756,216.5 758,216.5 760,216.5 762,213.4 764,212.3 766,213.7 768,216.5 770,216.5 772,216.5 774,216.5 776,214.2 778,212.5 780,213.2 782,216.2 784,216.5 786,216.5 788,216.5 790,215.2 792,213.1 794,213.1 796,215.1 798,216.5 800,216.5 802,216.5 804,216.5 804,216.6" fill="#8ccf83"/><rect x="4" y="238" width="800" height="52" fill="#ffffff"/><path d="M8.6 243.2h5v1.4h-5zM8.6 248.5h8v1.4h-8zM8.6 253.9h4v1.4h-4zM8.6 259.2h7v1.4h-7zM8.6 264.6h3v1.4h-3zM111.7 243.2h5v1.4h-5zM111.7 248.5h8v1.4h-8zM111.7 253.9h4v1.4h-4zM111.7 259.2h7v1.4h-7zM111.7 264.6h3v1.4h-3zM214.8 243.2h5v1.4h-5zM214.8 248.5h8v1.4h-8zM214.8 253.9h4v1.4h-4zM214.8 259.2h7v1.4h-7zM214.8 264.6h3v1.4h-3zM317.9 243.2h5v1.4h-5zM317.9 248.5h8v1.4h-8zM317.9 253.9h4v1.4h-4zM317.9 259.2h7v1.4h-7zM317.9 264.6h3v1.4h-3zM421.0 243.2h5v1.4h-5zM421.0 248.5h8v1.4h-8zM421.0 253.9h4v1.4h-4zM421.0 259.2h7v1.4h-7zM421.0 264.6h3v1.4h-3zM524.1 243.2h5v1.4h-5zM524.1 248.5h8v1.4h-8zM524.1 253.9h4v1.4h-4zM524.1 259.2h7v1.4h-7zM524.1 264.6h3v1.4h-3zM627.2 243.2h5v1.4h-5zM627.2 248.5h8v1.4h-8zM627.2 253.9h4v1.4h-4zM627.2 259.2h7v1.4h-7zM627.2 264.6h3v1.4h-3zM730.3 243.2h5v1.4h-5zM730.3 248.5h8v1.4h-8zM730.3 253.9h4v1.4h-4zM730.3 259.2h7v1.4h-7zM730.3 264.6h3v1.4h-3z" fill="#d0d0d0"/><path d="M64.9 272.9h3v3h-3zM95.6 261.4h3v3h-3zM76.1 275.0h3v3h-3zM49.7 272.7h3v3h-3zM95.7 264.8h3v3h-3zM15.9 261.7h3v3h-3zM50.1 273.7h3v3h-3zM60.2 282.0h3v3h-3zM6.3 274.6h3v3h-3zM93.1 278.9h3v3h-3zM78.6 280.0h3v3h-3zM18.3 283.7h3v3h-3zM64.3 273.8h3v3h-3zM88.7 273.8h3v3h-3zM25.1 277.7h3v3h-3zM88.8 286.5h3v3h-3zM32.8 281.7h3v3h-3zM70.1 271.5h3v3h-3zM24.7 283.2h3v3h-3zM97.9 269.7h3v3h-3zM90.9 271.6h3v3h-3zM20.9 279.6h3v3h-3zM19.0 278.8h3v3h-3zM63.0 275.8h3v3h-3zM5.3 270.8h3v3h-3zM34.8 267.9h3v3h-3zM83.7 267.6h3v3h-3zM51.2 274.2h3v3h-3zM72.7 286.5h3v3h-3zM7.2 280.0h3v3h-3zM77.1 274.2h3v3h-3zM80.7 272.4h3v3h-3zM40.2 272.7h3v3h-3zM9.5 273.1h3v3h-3zM22.4 277.8h3v3h-3zM77.6 272.2h3v3h-3zM94.3 279.3h3v3h-3zM39.1 271.3h3v3h-3zM55.4 274.0h3v3h-3zM76.9 270.3h3v3h-3zM81.6 274.7h3v3h-3zM95.9 272.1h3v3h-3zM13.8 268.5h3v3h-3zM93.2 281.4h3v3h-3zM37.7 281.1h3v3h-3zM35.0 269.6h3v3h-3zM35.4 274.7h3v3h-3zM19.3 276.0h3v3h-3zM71.2 277.5h3v3h-3zM9.7 273.4h3v3h-3zM99.8 266.7h3v3h-3zM27.8 272.0h3v3h-3zM62.1 277.0h3v3h-3zM45.5 266.8h3v3h-3zM10.4 275.0h3v3h-3zM52.4 272.6h3v3h-3zM85.6 281.0h3v3h-3zM96.3 281.6h3v3h-3zM65.6 274.3h3v3h-3zM46.8 270.4h3v3h-3zM19.3 276.7h3v3h-3zM48.5 268.8h3v3h-3zM101.0 284.6h3v3h-3zM48.6 259.5h3v3h-3zM51.9 272.5h3v3h-3zM33.0 265.8h3v3h-3zM43.8 277.5h3v3h-3zM100.0 278.8h3v3h-3zM97.2 267.9h3v3h-3zM37.5 267.8h3v3h-3zM13.6 271.8h3v3h-3zM88.4 285.3h3v3h-3zM39.7 276.1h3v3h-3zM71.8 262.1h3v3h-3zM68.8 273.9h3v3h-3zM72.7 267.0h3v3h-3zM32.0 261.9h3v3h-3zM71.4 274.5h3v3h-3zM33.2 282.8h3v3h-3zM60.8 270.2h3v3h-3zM6.1 268.6h3v3h-3zM69.5 272.0h3v3h-3zM49.5 277.5h3v3h-3zM81.7 264.5h3v3h-3zM38.4 266.6h3v3h-3zM84.6 264.7h3v3h-3zM38.6 281.1h3v3h-3zM71.1 262.0h3v3h-3zM201.9 281.4h3v3h-3zM159.0 271.3h3v3h-3zM124.1 281.8h3v3h-3zM154.0 259.8h3v3h-3zM174.5 271.4h3v3h-3zM124.6 262.7h3v3h-3zM183.1 264.7h3v3h-3zM148.5 268.6h3v3h-3zM168.0 275.0h3v3h-3zM177.3 263.9h3v3h-3zM110.8 277.4h3v3h-3zM170.6 279.7h3v3h-3zM129.1 269.7h3v3h-3zM112.1 264.7h3v3h-3zM153.4 273.8h3v3h-3zM120.9 275.7h3v3h-3zM138.6 275.4h3v3h-3zM111.5 277.6h3v3h-3zM152.8 266.7h3v3h-3zM164.8 279.9h3v3h-3zM131.0 273.7h3v3h-3zM147.1 273.4h3v3h-3zM134.9 270.7h3v3h-3zM188.0 275.3h3v3h-3zM144.0 282.6h3v3h-3zM117.2 275.6h3v3h-3zM160.5 268.7h3v3h-3zM200.2 281.1h3v3h-3zM186.8 262.6h3v3h-3zM169.8 279.6h3v3h-3zM143.6 279.2h3v3h-3zM162.3 280.6h3v3h-3zM200.1 282.6h3v3h-3zM141.8 271.6h3v3h-3zM194.0 276.7h3v3h-3zM162.5 273.5h3v3h-3zM167.2 279.6h3v3h-3zM193.8 280.9h3v3h-3zM144.2 269.1h3v3h-3zM136.1 275.5h3v3h-3zM201.6 260.9h3v3h-3zM195.9 285.4h3v3h-3zM165.4 272.3h3v3h-3zM155.8 286.5h3v3h-3zM148.0 265.3h3v3h-3zM155.4 286.5h3v3h-3zM135.6 270.1h3v3h-3zM167.8 274.0h3v3h-3zM150.7 270.3h3v3h-3zM187.6 284.9h3v3h-3zM109.4 268.2h3v3h-3zM198.0 272.4h3v3h-3zM183.2 273.6h3v3h-3zM123.0 278.9h3v3h-3zM203.1 271.0h3v3h-3zM153.7 282.5h3v3h-3zM170.1 264.6h3v3h-3zM119.5 266.7h3v3h-3zM181.2 270.9h3v3h-3zM140.4 281.5h3v3h-3zM136.6 266.0h3v3h-3zM142.8 272.1h3v3h-3zM179.7 271.9h3v3h-3zM132.4 272.5h3v3h-3zM151.9 285.8h3v3h-3zM160.5 266.4h3v3h-3zM109.5 274.8h3v3h-3zM163.4 266.4h3v3h-3zM176.2 268.2h3v3h-3zM195.7 267.7h3v3h-3zM145.1 263.2h3v3h-3zM127.0 281.9h3v3h-3zM136.6 274.7h3v3h-3zM188.5 271.3h3v3h-3zM174.9 268.4h3v3h-3zM183.1 275.8h3v3h-3zM195.6 278.3h3v3h-3zM160.9 279.6h3v3h-3zM155.9 271.6h3v3h-3zM164.4 276.9h3v3h-3zM186.1 278.0h3v3h-3zM186.9 275.5h3v3h-3zM184.2 272.7h3v3h-3zM177.5 272.2h3v3h-3zM202.2 284.1h3v3h-3zM112.8 273.4h3v3h-3zM189.0 275.4h3v3h-3zM199.6 283.1h3v3h-3zM279.7 277.3h3v3h-3zM299.4 277.7h3v3h-3zM225.6 268.1h3v3h-3zM226.7 269.0h3v3h-3zM271.0 276.6h3v3h-3zM247.6 274.4h3v3h-3zM218.1 281.8h3v3h-3zM282.5 276.6h3v3h-3zM295.6 278.3h3v3h-3zM241.4 278.9h3v3h-3zM268.9 259.5h3v3h-3zM247.2 274.6h3v3h-3zM216.6 272.2h3v3h-3zM271.9 269.8h3v3h-3zM259.8 280.8h3v3h-3zM270.9 268.9h3v3h-3zM236.5 268.6h3v3h-3zM283.3 271.8h3v3h-3zM260.9 276.8h3v3h-3zM246.9 277.2h3v3h-3zM282.0 278.1h3v3h-3zM274.1 283.2h3v3h-3zM219.4 272.0h3v3h-3zM223.2 270.9h3v3h-3zM268.3 274.5h3v3h-3zM257.4 286.5h3v3h-3zM242.3 274.0h3v3h-3zM280.9 271.9h3v3h-3zM216.4 283.3h3v3h-3zM276.7 286.5h3v3h-3zM232.6 286.5h3v3h-3zM275.1 285.7h3v3h-3zM290.1 279.6h3v3h-3zM245.2 280.8h3v3h-3zM233.8 268.8h3v3h-3zM244.7 281.6h3v3h-3zM248.3 281.9h3v3h-3zM273.5 283.2h3v3h-3zM288.5 261.4h3v3h-3zM260.9 278.9h3v3h-3zM268.2 263.5h3v3h-3zM249.2 268.5h3v3h-3zM220.5 278.0h3v3h-3zM215.0 274.4h3v3h-3zM296.7 262.1h3v3h-3zM211.2 274.9h3v3h-3zM256.4 280.8h3v3h-3zM252.4 267.5h3v3h-3zM255.9 276.7h3v3h-3zM226.5 275.8h3v3h-3zM247.2 263.0h3v3h-3zM225.8 282.7h3v3h-3zM235.6 272.8h3v3h-3zM238.8 277.5h3v3h-3zM233.8 271.8h3v3h-3zM300.0 273.7h3v3h-3zM246.7 283.1h3v3h-3zM276.0 269.6h3v3h-3zM256.5 276.7h3v3h-3zM275.4 272.4h3v3h-3zM239.2 268.5h3v3h-3zM226.9 263.7h3v3h-3zM230.5 278.4h3v3h-3zM218.7 274.3h3v3h-3zM249.7 279.9h3v3h-3zM241.2 272.4h3v3h-3zM256.2 271.2h3v3h-3zM280.2 284.3h3v3h-3zM226.9 274.1h3v3h-3zM301.6 283.6h3v3h-3zM273.3 259.5h3v3h-3zM211.8 281.3h3v3h-3zM217.0 274.8h3v3h-3zM215.5 266.6h3v3h-3zM263.9 281.7h3v3h-3zM244.8 273.0h3v3h-3zM220.2 286.5h3v3h-3zM258.4 279.8h3v3h-3zM301.1 278.3h3v3h-3zM216.0 275.2h3v3h-3zM249.4 278.4h3v3h-3zM250.4 275.4h3v3h-3zM240.6 275.3h3v3h-3zM304.6 274.1h3v3h-3zM228.4 266.6h3v3h-3zM262.3 273.1h3v3h-3zM219.3 272.2h3v3h-3zM263.3 276.5h3v3h-3zM402.8 262.6h3v3h-3zM334.9 265.7h3v3h-3zM316.0 265.9h3v3h-3zM369.2 271.6h3v3h-3zM350.5 265.8h3v3h-3zM402.0 265.8h3v3h-3zM343.9 261.4h3v3h-3zM335.8 277.5h3v3h-3zM325.4 272.4h3v3h-3zM388.5 276.2h3v3h-3zM393.0 272.1h3v3h-3zM322.2 276.8h3v3h-3zM337.8 279.7h3v3h-3zM369.7 277.1h3v3h-3zM337.9 283.3h3v3h-3zM318.9 277.5h3v3h-3zM333.5 272.0h3v3h-3zM323.8 279.9h3v3h-3zM354.7 269.1h3v3h-3zM367.7 284.0h3v3h-3zM400.4 267.0h3v3h-3zM369.5 264.0h3v3h-3zM356.8 277.5h3v3h-3zM406.1 264.4h3v3h-3zM384.3 271.9h3v3h-3zM392.3 268.4h3v3h-3zM351.0 275.2h3v3h-3zM330.6 275.3h3v3h-3zM339.5 271.0h3v3h-3zM320.4 268.5h3v3h-3zM387.7 272.0h3v3h-3zM319.2 272.9h3v3h-3zM326.8 265.1h3v3h-3zM405.5 284.0h3v3h-3zM373.1 274.4h3v3h-3zM349.1 280.6h3v3h-3zM346.0 282.5h3v3h-3zM393.8 274.2h3v3h-3zM384.1 280.4h3v3h-3zM330.8 278.2h3v3h-3zM382.5 259.5h3v3h-3zM390.7 278.8h3v3h-3zM325.7 267.3h3v3h-3zM358.6 286.5h3v3h-3zM356.0 262.7h3v3h-3zM404.3 277.7h3v3h-3zM365.5 282.5h3v3h-3zM324.3 271.8h3v3h-3zM392.6 271.6h3v3h-3zM408.3 274.6h3v3h-3zM317.5 266.6h3v3h-3zM399.0 269.9h3v3h-3zM352.0 274.7h3v3h-3zM333.6 278.9h3v3h-3zM368.3 266.4h3v3h-3zM337.5 282.4h3v3h-3zM348.1 273.7h3v3h-3zM395.0 286.5h3v3h-3zM396.0 268.4h3v3h-3zM328.0 268.8h3v3h-3zM394.2 271.6h3v3h-3zM330.6 273.6h3v3h-3zM323.8 270.6h3v3h-3zM333.5 259.5h3v3h-3zM390.9 268.9h3v3h-3zM397.2 282.7h3v3h-3zM374.2 275.6h3v3h-3zM315.3 267.2h3v3h-3zM363.5 269.8h3v3h-3zM351.7 271.2h3v3h-3zM344.8 279.3h3v3h-3zM351.1 274.5h3v3h-3zM360.1 271.5h3v3h-3zM408.7 266.9h3v3h-3zM392.7 282.8h3v3h-3zM378.7 268.7h3v3h-3zM365.9 275.4h3v3h-3zM371.3 267.3h3v3h-3zM379.6 268.0h3v3h-3zM321.8 272.7h3v3h-3zM322.7 268.0h3v3h-3zM387.3 280.6h3v3h-3zM383.0 268.0h3v3h-3zM340.7 286.5h3v3h-3zM383.1 283.7h3v3h-3zM378.7 278.5h3v3h-3zM406.3 281.8h3v3h-3zM394.9 267.3h3v3h-3zM488.4 269.9h3v3h-3zM467.1 270.5h3v3h-3zM503.5 274.8h3v3h-3zM469.7 286.5h3v3h-3zM455.2 280.3h3v3h-3zM434.5 273.6h3v3h-3zM480.2 285.6h3v3h-3zM476.4 264.7h3v3h-3zM454.6 281.6h3v3h-3zM470.6 280.1h3v3h-3zM486.1 263.5h3v3h-3zM437.8 283.6h3v3h-3zM446.8 272.4h3v3h-3zM503.6 282.9h3v3h-3zM433.5 265.7h3v3h-3zM439.0 264.9h3v3h-3zM423.4 261.8h3v3h-3zM501.8 268.3h3v3h-3zM487.4 267.3h3v3h-3zM468.2 277.1h3v3h-3zM504.3 271.7h3v3h-3zM475.6 278.7h3v3h-3zM510.3 274.2h3v3h-3zM428.5 275.1h3v3h-3zM471.5 270.0h3v3h-3zM435.7 270.9h3v3h-3zM474.5 267.2h3v3h-3zM487.4 265.2h3v3h-3zM423.3 260.7h3v3h-3zM509.4 274.7h3v3h-3zM448.0 279.3h3v3h-3zM506.5 265.6h3v3h-3zM439.4 269.2h3v3h-3zM463.2 261.2h3v3h-3zM427.1 274.9h3v3h-3zM426.3 277.2h3v3h-3zM432.0 271.1h3v3h-3zM490.3 271.4h3v3h-3zM488.2 278.5h3v3h-3zM485.9 262.3h3v3h-3zM506.2 282.7h3v3h-3zM510.1 271.0h3v3h-3zM427.3 275.5h3v3h-3zM437.2 275.0h3v3h-3zM453.4 263.6h3v3h-3zM488.8 276.1h3v3h-3zM425.5 266.5h3v3h-3zM453.5 278.4h3v3h-3zM428.7 268.1h3v3h-3zM483.1 269.7h3v3h-3zM465.0 286.5h3v3h-3zM424.3 269.7h3v3h-3zM490.4 272.5h3v3h-3zM428.6 267.9h3v3h-3zM463.4 266.7h3v3h-3zM505.7 282.3h3v3h-3zM454.1 271.5h3v3h-3zM484.4 281.2h3v3h-3zM493.2 268.4h3v3h-3zM449.8 270.9h3v3h-3zM498.9 271.3h3v3h-3zM457.8 273.2h3v3h-3zM440.3 272.2h3v3h-3zM443.4 271.2h3v3h-3zM426.6 259.5h3v3h-3zM469.4 276.3h3v3h-3zM454.5 276.2h3v3h-3zM451.6 272.3h3v3h-3zM495.3 285.1h3v3h-3zM452.1 273.9h3v3h-3zM419.0 273.5h3v3h-3zM454.2 281.0h3v3h-3zM467.1 278.0h3v3h-3zM511.0 275.1h3v3h-3zM459.9 270.7h3v3h-3zM444.2 274.0h3v3h-3zM509.2 270.4h3v3h-3zM422.5 266.0h3v3h-3zM455.1 274.8h3v3h-3zM474.4 266.4h3v3h-3zM504.1 267.6h3v3h-3zM420.9 265.9h3v3h-3zM419.7 274.4h3v3h-3zM501.4 266.5h3v3h-3zM496.7 279.2h3v3h-3zM513.4 270.1h3v3h-3zM490.1 276.5h3v3h-3zM492.4 271.1h3v3h-3zM561.1 286.5h3v3h-3zM541.3 269.7h3v3h-3zM561.0 272.5h3v3h-3zM548.0 281.1h3v3h-3zM584.6 276.5h3v3h-3zM564.5 276.4h3v3h-3zM527.6 262.8h3v3h-3zM605.6 283.4h3v3h-3zM539.4 286.2h3v3h-3zM612.8 275.0h3v3h-3zM578.1 276.8h3v3h-3zM608.9 277.3h3v3h-3zM610.6 277.8h3v3h-3zM561.7 274.3h3v3h-3zM546.1 273.7h3v3h-3zM595.0 266.9h3v3h-3zM535.1 259.5h3v3h-3zM588.0 271.4h3v3h-3zM529.2 281.0h3v3h-3zM556.5 279.8h3v3h-3zM555.9 264.6h3v3h-3zM613.3 274.8h3v3h-3zM543.7 268.7h3v3h-3zM572.9 271.3h3v3h-3zM590.8 278.7h3v3h-3zM588.3 279.3h3v3h-3zM521.3 274.4h3v3h-3zM569.0 266.5h3v3h-3zM579.2 274.1h3v3h-3zM568.6 271.3h3v3h-3zM524.2 268.8h3v3h-3zM522.6 277.6h3v3h-3zM549.1 264.1h3v3h-3zM609.4 276.6h3v3h-3zM556.1 262.9h3v3h-3zM610.6 271.5h3v3h-3zM611.8 279.2h3v3h-3zM536.5 273.1h3v3h-3zM610.1 280.1h3v3h-3zM591.2 277.0h3v3h-3zM571.3 261.7h3v3h-3zM549.3 283.4h3v3h-3zM573.5 275.3h3v3h-3zM554.2 270.2h3v3h-3zM568.0 269.3h3v3h-3zM564.1 271.6h3v3h-3zM526.2 278.8h3v3h-3zM534.3 276.8h3v3h-3zM613.5 273.0h3v3h-3zM595.8 278.9h3v3h-3zM591.7 272.5h3v3h-3zM580.6 286.2h3v3h-3zM557.8 270.0h3v3h-3zM545.8 269.8h3v3h-3zM604.7 260.1h3v3h-3zM537.5 279.0h3v3h-3zM533.7 284.1h3v3h-3zM574.4 277.1h3v3h-3zM521.4 285.7h3v3h-3zM568.0 276.9h3v3h-3zM604.2 282.3h3v3h-3zM531.8 275.7h3v3h-3zM589.8 266.3h3v3h-3zM541.8 267.5h3v3h-3zM611.7 275.4h3v3h-3zM586.2 275.1h3v3h-3zM529.4 280.4h3v3h-3zM582.9 276.6h3v3h-3zM606.2 273.0h3v3h-3zM582.3 271.0h3v3h-3zM601.6 281.8h3v3h-3zM545.4 281.3h3v3h-3zM549.2 285.0h3v3h-3zM570.1 273.6h3v3h-3zM607.2 269.6h3v3h-3zM541.3 274.3h3v3h-3zM545.8 277.9h3v3h-3zM529.0 272.0h3v3h-3zM554.4 279.8h3v3h-3zM580.2 276.9h3v3h-3zM583.0 275.2h3v3h-3zM567.7 276.8h3v3h-3zM586.5 265.1h3v3h-3zM608.2 276.4h3v3h-3zM534.4 272.6h3v3h-3zM572.0 281.4h3v3h-3zM607.0 264.1h3v3h-3zM560.8 270.1h3v3h-3zM699.0 276.4h3v3h-3zM634.0 268.6h3v3h-3zM648.5 264.6h3v3h-3zM649.0 284.6h3v3h-3zM684.1 262.7h3v3h-3zM634.8 260.4h3v3h-3zM697.6 271.9h3v3h-3zM684.3 276.2h3v3h-3zM704.7 271.6h3v3h-3zM717.0 272.4h3v3h-3zM660.5 266.4h3v3h-3zM648.7 265.3h3v3h-3zM662.8 272.0h3v3h-3zM629.8 276.2h3v3h-3zM692.5 261.9h3v3h-3zM629.6 280.8h3v3h-3zM652.6 280.4h3v3h-3zM699.6 286.5h3v3h-3zM709.7 270.3h3v3h-3zM663.6 273.4h3v3h-3zM645.3 282.1h3v3h-3zM651.5 275.0h3v3h-3zM634.0 259.5h3v3h-3zM714.5 272.4h3v3h-3zM668.4 282.8h3v3h-3zM634.6 280.5h3v3h-3zM675.2 286.5h3v3h-3zM675.8 283.6h3v3h-3zM665.6 272.3h3v3h-3zM717.1 282.0h3v3h-3zM664.7 275.6h3v3h-3zM711.8 281.4h3v3h-3zM660.3 263.3h3v3h-3zM654.9 262.1h3v3h-3zM701.5 269.8h3v3h-3zM628.7 272.8h3v3h-3zM713.8 266.3h3v3h-3zM711.8 275.1h3v3h-3zM678.8 267.9h3v3h-3zM695.1 273.5h3v3h-3zM648.2 262.2h3v3h-3zM681.7 275.6h3v3h-3zM636.5 276.6h3v3h-3zM693.7 283.5h3v3h-3zM633.5 277.1h3v3h-3zM639.7 273.4h3v3h-3zM632.2 264.6h3v3h-3zM706.0 276.6h3v3h-3zM639.3 272.5h3v3h-3zM679.4 270.5h3v3h-3zM647.8 272.1h3v3h-3zM692.9 275.3h3v3h-3zM635.4 274.0h3v3h-3zM680.5 267.4h3v3h-3zM685.0 259.7h3v3h-3zM712.0 274.5h3v3h-3zM650.7 266.5h3v3h-3zM636.4 285.5h3v3h-3zM664.0 259.5h3v3h-3zM635.9 283.0h3v3h-3zM686.6 274.0h3v3h-3zM623.7 262.5h3v3h-3zM714.3 268.4h3v3h-3zM687.2 285.8h3v3h-3zM664.0 278.8h3v3h-3zM656.3 264.8h3v3h-3zM693.9 262.8h3v3h-3zM682.6 273.2h3v3h-3zM700.1 277.8h3v3h-3zM623.7 280.2h3v3h-3zM699.6 275.2h3v3h-3zM627.7 260.7h3v3h-3zM675.0 270.1h3v3h-3zM643.1 274.0h3v3h-3zM717.2 276.5h3v3h-3zM703.3 269.5h3v3h-3zM686.2 266.2h3v3h-3zM645.6 280.0h3v3h-3zM649.9 283.4h3v3h-3zM679.5 274.1h3v3h-3zM695.0 266.2h3v3h-3zM653.0 273.3h3v3h-3zM694.3 267.1h3v3h-3zM696.4 280.1h3v3h-3zM666.3 272.6h3v3h-3zM648.6 271.3h3v3h-3zM704.4 274.9h3v3h-3zM625.0 275.4h3v3h-3zM782.9 279.4h3v3h-3zM758.8 278.2h3v3h-3zM785.6 265.3h3v3h-3zM728.5 274.7h3v3h-3zM785.0 274.5h3v3h-3zM787.9 264.1h3v3h-3zM771.7 270.7h3v3h-3zM772.0 260.5h3v3h-3zM728.2 286.5h3v3h-3zM741.5 259.9h3v3h-3zM731.5 271.8h3v3h-3zM753.8 276.1h3v3h-3zM733.2 273.6h3v3h-3zM758.1 274.0h3v3h-3zM748.7 272.6h3v3h-3zM738.9 266.8h3v3h-3zM796.6 281.7h3v3h-3zM742.6 267.1h3v3h-3zM756.2 266.9h3v3h-3zM728.6 275.6h3v3h-3zM760.1 274.7h3v3h-3zM789.8 263.1h3v3h-3zM776.8 274.6h3v3h-3zM793.9 259.8h3v3h-3zM784.8 264.9h3v3h-3zM775.0 278.5h3v3h-3zM791.4 271.8h3v3h-3zM740.7 266.3h3v3h-3zM750.7 273.5h3v3h-3zM783.1 283.8h3v3h-3zM740.8 260.8h3v3h-3zM753.5 270.8h3v3h-3zM733.6 268.4h3v3h-3zM737.2 269.5h3v3h-3zM747.8 277.4h3v3h-3zM757.9 273.7h3v3h-3zM734.4 282.1h3v3h-3zM796.9 273.8h3v3h-3zM787.8 266.4h3v3h-3zM732.6 286.5h3v3h-3zM737.7 275.9h3v3h-3zM770.8 273.6h3v3h-3zM782.2 261.4h3v3h-3zM759.8 275.2h3v3h-3zM794.0 266.9h3v3h-3zM739.2 268.2h3v3h-3zM758.0 261.7h3v3h-3zM743.5 278.1h3v3h-3zM748.3 274.6h3v3h-3zM766.1 271.1h3v3h-3zM742.8 268.9h3v3h-3zM733.6 265.6h3v3h-3zM780.2 268.5h3v3h-3zM789.5 276.8h3v3h-3zM783.8 269.8h3v3h-3zM735.8 283.0h3v3h-3zM764.7 282.0h3v3h-3zM793.8 278.3h3v3h-3zM773.3 281.4h3v3h-3zM761.1 275.6h3v3h-3zM759.2 276.7h3v3h-3zM759.6 278.0h3v3h-3zM731.9 271.2h3v3h-3zM748.0 269.0h3v3h-3zM733.4 268.4h3v3h-3zM748.1 286.5h3v3h-3zM733.7 264.2h3v3h-3zM733.1 286.5h3v3h-3z" fill="#4a7be8"/><rect x="106.2" y="238" width="1.7" height="52" fill="#ffffff"/><rect x="209.3" y="238" width="1.7" height="52" fill="#ffffff"/><rect x="312.4" y="238" width="1.7" height="52" fill="#ffffff"/><rect x="415.5" y="238" width="1.7" height="52" fill="#ffffff"/><rect x="518.6" y="238" width="1.7" height="52" fill="#ffffff"/><rect x="621.7" y="238" width="1.7" height="52" fill="#ffffff"/><rect x="724.8" y="238" width="1.7" height="52" fill="#ffffff"/><path d="M4 329.5V324H15V321.5H37V303.5H47.5V322.5H58V311H72.5V322H90V303.5H99.5V322H104V313H116V295.5H118.5V322H131V305.5H140V322H145V315.5H160V298.5H165V322H174V307.5H185V322H187V318H202V300.5H207V322H214V310.5H227V320.5H238V303H245V322H251V313H265V295.5H267V322H278V305.5H287V322H291V315.5H302V297.5H306V322H314V308H323V322H326V318H336V300H341V322H349V310.5H359V320H370V302.5H378V322H385V313H395V295.5H398V322H406V305H414V322H418V314H429V297.5H433V322H442V307.5H450V322H452V317.5H464V300H472V322H478V310H490V320H503V302.5H511V322H516V312.5H527V295H531V322H541V305H551V322H554V315H565V297.5H571V322H579V307.5H590V322H593V317.5H604V299.6H611V322H618V310H630V320H645V301.4H654V322H659V311.7H670V293.7H672V322H683V304.7H695V322H710V296.5H714V322H723V306H734.5V329H4Z" fill="#35436e"/><path d="M4 329.5V324H15V321.5H37V303.5H47.5V322.5H58V311H72.5V322H90V303.5H99.5V322H104V313H116V295.5H118.5V322H131V305.5H140V322H145V315.5H160V298.5H165V322H174V307.5H185V322H187V318H202V300.5H207V322H214V310.5H227V320.5H238V303H245V322H251V313H265V295.5H267V322H278V305.5H287V322H291V315.5H302V297.5H306V322H314V308H323V322H326V318H336V300H341V322H349V310.5H359V320H370V302.5H378V322H385V313H395V295.5H398V322H406V305H414V322H418V314H429V297.5H433V322H442V307.5H450V322H452V317.5H464V300H472V322H478V310H490V320H503V302.5H511V322H516V312.5H527V295H531V322H541V305H551V322H554V315H565V297.5H571V322H579V307.5H590V322H593V317.5H604V299.6H611V322H618V310H630V320H645V301.4H654V322H659V311.7H670V293.7H672V322H683V304.7H695V322H710V296.5H714V322H723V306H734.5V329" fill="none" stroke="#6f93e6" stroke-width="1.2"/><rect x="395.8" y="142" width="2.4" height="7.6" fill="#ff3a0c"/></svg><span style="position:absolute;left:-3px;top:5px;font:16.5px/1 'Liberation Sans',sans-serif;color:#ddd;white-space:pre;letter-spacing:0.25px">6000 ms</span></div>
<div style="position:absolute;left:389.6px;top:119px;width:1.4px;height:211px;background:#4a4a4a"></div>
<div style="position:absolute;left:403px;top:119px;width:1.2px;height:211px;background:#4a4a4a"></div>
<div style="position:absolute;left:388px;top:121px;width:6.2px;height:31px;background:#747474"></div>
<div style="position:absolute;left:400.2px;top:121px;width:7.0px;height:31px;background:#747474"></div>
<div style="position:absolute;left:4px;top:330px;width:800px;height:130px;background:#242424"></div>
<div style="position:absolute;left:4px;top:329.6px;width:800px;height:1.4px;background:#3c3f44"></div>
<div style="position:absolute;left:90.4px;top:331px;width:1.2px;height:128px;background:#353535"></div>
<div style="position:absolute;left:256.4px;top:331px;width:1.2px;height:128px;background:#353535"></div>
<div style="position:absolute;left:422.4px;top:331px;width:1.2px;height:128px;background:#353535"></div>
<div style="position:absolute;left:588.9px;top:331px;width:1.2px;height:128px;background:#353535"></div>
<div style="position:absolute;left:754.9px;top:331px;width:1.2px;height:128px;background:#353535"></div>
<div style="position:absolute;left:4px;top:340.3px;width:52px;height:28.2px;background:#f3c454;overflow:hidden"></div>
<svg style="position:absolute;left:43px;top:340.3px;overflow:hidden" width="13" height="13"><path d="M0 0H13V13Z" fill="#fc2a0c"/></svg>
<span id="f_a" style="position:absolute;left:13px;top:346px;font:18.2px/1 'DejaVu Sans','Liberation Sans',sans-serif;color:#33301f;white-space:pre;letter-spacing:0.15px">A…</span>
<div style="position:absolute;left:57.7px;top:340.3px;width:36.8px;height:28.2px;background:#9d86e9;overflow:hidden"></div>
<div style="position:absolute;left:96.5px;top:340.3px;width:92.9px;height:28.2px;background:#7dba6c;overflow:hidden"></div>
<span id="f_pai" style="position:absolute;left:107px;top:346px;font:18.2px/1 'DejaVu Sans','Liberation Sans',sans-serif;color:#33301f;white-space:pre;letter-spacing:0.15px">Pai…42)</span>
<div style="position:absolute;left:260px;top:340.3px;width:6px;height:28.2px;background:#7dba6c;overflow:hidden"></div>
<div style="position:absolute;left:289.4px;top:340.3px;width:1.6px;height:28.2px;background:#9d86e9;overflow:hidden"></div>
<div style="position:absolute;left:292px;top:340.3px;width:6px;height:28.2px;background:#f3c454;overflow:hidden"></div>
<div style="position:absolute;left:330px;top:340.3px;width:454.3px;height:28.2px;background:#f3c454;overflow:hidden"></div>
<svg style="position:absolute;left:771.3px;top:340.3px;overflow:hidden" width="13" height="13"><path d="M0 0H13V13Z" fill="#fc2a0c"/></svg>
<span id="f_anim" style="position:absolute;left:339px;top:346px;font:18.2px/1 'DejaVu Sans','Liberation Sans',sans-serif;color:#33301f;white-space:pre;letter-spacing:0.28px">Animation Frame Fired (app.js:95)</span>
<div style="position:absolute;left:4px;top:370.6px;width:52px;height:28.2px;background:#f3c454;overflow:hidden"></div>
<span id="f_f" style="position:absolute;left:13px;top:376px;font:18.2px/1 'DejaVu Sans','Liberation Sans',sans-serif;color:#33301f;white-space:pre;letter-spacing:0.15px">F…)</span>
<div style="position:absolute;left:330px;top:370.6px;width:454.3px;height:28.2px;background:#f3c454;overflow:hidden"></div>
<span id="f_func" style="position:absolute;left:339.5px;top:376px;font:18.2px/1 'DejaVu Sans','Liberation Sans',sans-serif;color:#33301f;white-space:pre;letter-spacing:0.28px">Function Call (app.js:62)</span>
<div style="position:absolute;left:4px;top:400.4px;width:39.6px;height:28.2px;background:#c6d8ee;overflow:hidden"></div>
<div style="position:absolute;left:333px;top:400.4px;width:451.3px;height:28.2px;background:#c6d8ee;overflow:hidden"></div>
<span id="f_upd" style="position:absolute;left:342px;top:405px;font:18.2px/1 'DejaVu Sans','Liberation Sans',sans-serif;color:#33301f;white-space:pre;letter-spacing:0.15px">app.update</span>
<div style="position:absolute;left:4px;top:430.2px;width:4.4px;height:28.2px;background:#9d86e9;overflow:hidden"></div>
<svg style="position:absolute;left:4.0px;top:430.2px;overflow:hidden" width="4.4" height="13"><path d="M-8.6 0H4.4V13Z" fill="#fc2a0c"/></svg>
<div style="position:absolute;left:8.9px;top:430.2px;width:10.4px;height:28.2px;background:#9d86e9;overflow:hidden"></div>
<svg style="position:absolute;left:8.9px;top:430.2px;overflow:hidden" width="10.4" height="13"><path d="M-2.6 0H10.4V13Z" fill="#fc2a0c"/></svg>
<div style="position:absolute;left:19.8px;top:430.2px;width:1.0px;height:28.2px;background:#9d86e9;overflow:hidden"></div>
<div style="position:absolute;left:30.3px;top:430.2px;width:0.7px;height:28.2px;background:#9d86e9;overflow:hidden"></div>
<div style="position:absolute;left:31.5px;top:430.2px;width:6.7px;height:28.2px;background:#9d86e9;overflow:hidden"></div>
<svg style="position:absolute;left:31.5px;top:430.2px;overflow:hidden" width="6.7" height="13"><path d="M-6.3 0H6.7V13Z" fill="#fc2a0c"/></svg>
<div style="position:absolute;left:343.5px;top:430.2px;width:52.5px;height:28.2px;background:#9d86e9;overflow:hidden"></div>
<svg style="position:absolute;left:383px;top:430.2px;overflow:hidden" width="13" height="13"><path d="M0 0H13V13Z" fill="#fc2a0c"/></svg>
<div style="position:absolute;left:397.6px;top:430.2px;width:6.6px;height:28.2px;background:#9d86e9;overflow:hidden"></div>
<svg style="position:absolute;left:397.6px;top:430.2px;overflow:hidden" width="6.6" height="13"><path d="M-6.4 0H6.6V13Z" fill="#fc2a0c"/></svg>
<div style="position:absolute;left:407.8px;top:430.2px;width:5.0px;height:28.2px;background:#9d86e9;overflow:hidden"></div>
<svg style="position:absolute;left:407.8px;top:430.2px;overflow:hidden" width="5.0" height="13"><path d="M-8.0 0H5.0V13Z" fill="#fc2a0c"/></svg>
<div style="position:absolute;left:415.4px;top:430.2px;width:4.7px;height:28.2px;background:#9d86e9;overflow:hidden"></div>
<svg style="position:absolute;left:415.4px;top:430.2px;overflow:hidden" width="4.7" height="13"><path d="M-8.3 0H4.7V13Z" fill="#fc2a0c"/></svg>
<div style="position:absolute;left:424px;top:430.2px;width:56px;height:28.2px;background:#9d86e9;overflow:hidden"></div>
<svg style="position:absolute;left:467px;top:430.2px;overflow:hidden" width="13" height="13"><path d="M0 0H13V13Z" fill="#fc2a0c"/></svg>
<div style="position:absolute;left:482px;top:430.2px;width:26px;height:28.2px;background:#9d86e9;overflow:hidden"></div>
<svg style="position:absolute;left:495px;top:430.2px;overflow:hidden" width="13" height="13"><path d="M0 0H13V13Z" fill="#fc2a0c"/></svg>
<div style="position:absolute;left:525.7px;top:430.2px;width:34.7px;height:28.2px;background:#9d86e9;overflow:hidden"></div>
<svg style="position:absolute;left:547.4px;top:430.2px;overflow:hidden" width="13" height="13"><path d="M0 0H13V13Z" fill="#fc2a0c"/></svg>
<div style="position:absolute;left:610px;top:430.2px;width:32.5px;height:28.2px;background:#9d86e9;overflow:hidden"></div>
<svg style="position:absolute;left:629.5px;top:430.2px;overflow:hidden" width="13" height="13"><path d="M0 0H13V13Z" fill="#fc2a0c"/></svg>
<div style="position:absolute;left:648px;top:430.2px;width:3px;height:28.2px;background:#9d86e9;overflow:hidden"></div>
<svg style="position:absolute;left:648px;top:430.2px;overflow:hidden" width="3" height="13"><path d="M-10 0H3V13Z" fill="#fc2a0c"/></svg>
<div style="position:absolute;left:652px;top:430.2px;width:3px;height:28.2px;background:#9d86e9;overflow:hidden"></div>
<svg style="position:absolute;left:652px;top:430.2px;overflow:hidden" width="3" height="13"><path d="M-10 0H3V13Z" fill="#fc2a0c"/></svg>
<div style="position:absolute;left:709.6px;top:430.2px;width:15.4px;height:28.2px;background:#9d86e9;overflow:hidden"></div>
<svg style="position:absolute;left:712px;top:430.2px;overflow:hidden" width="13" height="13"><path d="M0 0H13V13Z" fill="#fc2a0c"/></svg>
<div style="position:absolute;left:737.7px;top:430.2px;width:34.3px;height:28.2px;background:#9d86e9;overflow:hidden"></div>
<svg style="position:absolute;left:759px;top:430.2px;overflow:hidden" width="13" height="13"><path d="M0 0H13V13Z" fill="#fc2a0c"/></svg>
<div style="position:absolute;left:782.7px;top:430.2px;width:1.6px;height:28.2px;background:#9d86e9;overflow:hidden"></div>
<svg style="position:absolute;left:782.7px;top:430.2px;overflow:hidden" width="1.6" height="13"><path d="M-11.4 0H1.6V13Z" fill="#fc2a0c"/></svg>
<span id="f_r1" style="position:absolute;left:352.4px;top:436px;font:18.2px/1 'DejaVu Sans','Liberation Sans',sans-serif;color:#33301f;white-space:pre;">R…</span>
<span id="f_r2" style="position:absolute;left:433.4px;top:436px;font:18.2px/1 'DejaVu Sans','Liberation Sans',sans-serif;color:#33301f;white-space:pre;">R…)</span>
<div style="position:absolute;left:38.2px;top:426.4px;width:8.6px;height:32.6px;background:linear-gradient(#6a5a3c,#8a7a5c);border:2.4px solid #cd9230;box-sizing:border-box"></div>
<div style="position:absolute;left:40.6px;top:432px;width:1.0px;height:14px;background:#d03a1c"></div>
<div style="position:absolute;left:303.6px;top:362.0px;width:5.2px;height:5.0px;background:#4c4c4c"></div>
<div style="position:absolute;left:303.6px;top:372.55px;width:5.2px;height:5.0px;background:#4c4c4c"></div>
<div style="position:absolute;left:303.6px;top:383.1px;width:5.2px;height:5.0px;background:#4c4c4c"></div>
<div style="position:absolute;left:303.6px;top:393.65px;width:5.2px;height:5.0px;background:#4c4c4c"></div>
<div style="position:absolute;left:303.6px;top:404.2px;width:5.2px;height:5.0px;background:#4c4c4c"></div>
<div style="position:absolute;left:303.6px;top:414.75px;width:5.2px;height:5.0px;background:#4c4c4c"></div>
<div style="position:absolute;left:303.6px;top:425.3px;width:5.2px;height:5.0px;background:#4c4c4c"></div>
<div style="position:absolute;left:303.6px;top:435.85px;width:5.2px;height:5.0px;background:#4c4c4c"></div>
<div style="position:absolute;left:303.6px;top:446.4px;width:5.2px;height:5.0px;background:#4c4c4c"></div>
<div style="position:absolute;left:303.6px;top:456.95px;width:5.2px;height:2.05px;background:#4c4c4c"></div>
<div style="position:absolute;left:4px;top:330.8px;width:196px;height:2.2px;overflow:hidden"><span id="f_main" style="position:absolute;left:32px;top:-16.6px;font:21px/1 'Liberation Sans',sans-serif;color:#c8c8c8;white-space:pre">Main</span></div>
<div style="position:absolute;left:4px;top:331px;width:800px;height:26px;background:rgba(36,36,36,0.45)"></div>
<span id="r0" style="position:absolute;right:725.5px;top:332.9px;font:20.8px/1 'Liberation Sans',sans-serif;color:#e4e4e4;white-space:pre;">5190 ms</span>
<span id="r1" style="position:absolute;right:559.5px;top:332.9px;font:20.8px/1 'Liberation Sans',sans-serif;color:#e4e4e4;white-space:pre;">5200 ms</span>
<span id="r2" style="position:absolute;right:393.5px;top:332.9px;font:20.8px/1 'Liberation Sans',sans-serif;color:#e4e4e4;white-space:pre;">5210 ms</span>
<span id="r3" style="position:absolute;right:227px;top:332.9px;font:20.8px/1 'Liberation Sans',sans-serif;color:#e4e4e4;white-space:pre;">5220 ms</span>
<span id="r4" style="position:absolute;right:61px;top:332.9px;font:20.8px/1 'Liberation Sans',sans-serif;color:#e4e4e4;white-space:pre;">5230 ms</span>
<div style="position:absolute;left:786px;top:375px;width:13.6px;height:41.5px;background:#6b6b6b;border-radius:7px"></div>
<div style="position:absolute;left:4px;top:459px;width:800px;height:1.5px;background:#4a4a4a"></div>
<div style="position:absolute;left:4px;top:460.5px;width:800px;height:36.5px;background:#2a2a2a"></div>
<div style="position:absolute;left:4px;top:495.4px;width:800px;height:1.6px;background:#525252"></div>
<svg style="position:absolute;left:16px;top:472px" width="21" height="21" viewBox="0 0 21 21"><rect x="0" y="0" width="21" height="21" rx="4.6" fill="#2b4a9c"/><path d="M4.4 11 L8.8 15.6 L17 4.4" fill="none" stroke="#fff" stroke-width="2.7"/></svg>
<span id="m_js" style="position:absolute;left:51px;top:472.2px;font:22px/1 'Liberation Sans',sans-serif;color:#c4c4c4;white-space:pre;transform:scaleX(0.9486);transform-origin:0 0">JS Heap</span>
<svg style="position:absolute;left:159px;top:472px" width="21" height="21" viewBox="0 0 21 21"><rect x="0" y="0" width="21" height="21" rx="4.6" fill="#a3222c"/><path d="M4.4 11 L8.8 15.6 L17 4.4" fill="none" stroke="#fff" stroke-width="2.7"/></svg>
<span id="m_doc" style="position:absolute;left:193px;top:472.2px;font:22px/1 'Liberation Sans',sans-serif;color:#c4c4c4;white-space:pre;transform:scaleX(0.9617);transform-origin:0 0">Documents</span>
<svg style="position:absolute;left:327px;top:472px" width="21" height="21" viewBox="0 0 21 21"><rect x="0" y="0" width="21" height="21" rx="4.6" fill="#2c8a32"/><path d="M4.4 11 L8.8 15.6 L17 4.4" fill="none" stroke="#fff" stroke-width="2.7"/></svg>
<span id="m_nod" style="position:absolute;left:363px;top:472.2px;font:22px/1 'Liberation Sans',sans-serif;color:#c4c4c4;white-space:pre;transform:scaleX(0.9467);transform-origin:0 0">Nodes</span>
<svg style="position:absolute;left:450.4px;top:472px" width="21" height="21" viewBox="0 0 21 21"><rect x="0" y="0" width="21" height="21" rx="4.6" fill="#a0702e"/><path d="M4.4 11 L8.8 15.6 L17 4.4" fill="none" stroke="#fff" stroke-width="2.7"/></svg>
<span id="m_lis" style="position:absolute;left:485px;top:472.2px;font:22px/1 'Liberation Sans',sans-serif;color:#c4c4c4;white-space:pre;transform:scaleX(0.9377);transform-origin:0 0">Listeners</span>
<svg style="position:absolute;left:596.5px;top:472px" width="21" height="21" viewBox="0 0 21 21"><rect x="0" y="0" width="21" height="21" rx="4.6" fill="#8c2a94"/><path d="M4.4 11 L8.8 15.6 L17 4.4" fill="none" stroke="#fff" stroke-width="2.7"/></svg>
<span id="m_gpu" style="position:absolute;left:631.4px;top:472.2px;font:22px/1 'Liberation Sans',sans-serif;color:#c4c4c4;white-space:pre;transform:scaleX(0.9478);transform-origin:0 0">GPU Memory</span>
<div style="position:absolute;left:778px;top:476px;width:16.6px;height:1.8px;background:#8e8e8e"></div>
<div style="position:absolute;left:778px;top:481.4px;width:16.6px;height:1.8px;background:#8e8e8e"></div>
<div style="position:absolute;left:778px;top:486.8px;width:16.6px;height:1.8px;background:#8e8e8e"></div>
<div style="position:absolute;left:4px;top:497.2px;width:800px;height:45.8px;background:#2a2a2a"></div>
<div style="position:absolute;left:4px;top:542.6px;width:800px;height:1.4px;background:#3c3c3c"></div>
<div style="position:absolute;left:14px;top:501.8px;width:105.6px;height:41.6px;background:#242424;border:1.2px solid #3f3f3f;border-bottom:none;box-sizing:border-box"></div>
<div style="position:absolute;left:4px;top:542.6px;width:800px;height:1.4px;background:#484848"></div>
<span id="s_sum" style="position:absolute;left:21.7px;top:512.4px;font:22px/1 'Liberation Sans',sans-serif;color:#e6e6e6;white-space:pre;transform:scaleX(0.9418);transform-origin:0 0">Summary</span>
<span id="s_bot" style="position:absolute;left:130.3px;top:512.4px;font:22px/1 'Liberation Sans',sans-serif;color:#a6a6a6;white-space:pre;transform:scaleX(0.9954);transform-origin:0 0">Bottom-Up</span>
<span id="s_call" style="position:absolute;left:254.4px;top:512.4px;font:22px/1 'Liberation Sans',sans-serif;color:#a6a6a6;white-space:pre;transform:scaleX(0.9159);transform-origin:0 0">Call Tree</span>
<span id="s_evt" style="position:absolute;left:355.2px;top:512.4px;font:22px/1 'Liberation Sans',sans-serif;color:#a6a6a6;white-space:pre;transform:scaleX(0.9334);transform-origin:0 0">Event Log</span>
<div style="position:absolute;left:4px;top:544px;width:800px;height:197px;background:#242424"></div>
<div style="position:absolute;left:18.2px;top:562px;width:21.0px;height:21.1px;background:#f3c75c"></div>
<span id="s_raf" style="position:absolute;left:46.4px;top:562px;font:22px/1 'Liberation Sans',sans-serif;color:#dadada;white-space:pre;transform:scaleX(1.0362);transform-origin:0 0;">Request Animation Frame</span>
<span id="s_tt" style="position:absolute;left:22.3px;top:607px;font:21px/1 'Liberation Sans',sans-serif;color:#6e6e6e;white-space:pre;transform:scaleX(0.9916);transform-origin:0 0;">Total Time</span>
<span id="s_ttv" style="position:absolute;left:135.4px;top:607px;font:21px/1 'Liberation Sans',sans-serif;color:#cfcfcf;white-space:pre;">0</span>
<span id="s_st" style="position:absolute;left:22.3px;top:642.6px;font:21px/1 'Liberation Sans',sans-serif;color:#6e6e6e;white-space:pre;transform:scaleX(0.9874);transform-origin:0 0;">Self Time</span>
<span id="s_stv" style="position:absolute;left:126.9px;top:642.6px;font:21px/1 'Liberation Sans',sans-serif;color:#cfcfcf;white-space:pre;">0</span>
<span id="s_de" style="position:absolute;left:22.3px;top:677.4px;font:21px/1 'Liberation Sans',sans-serif;color:#6e6e6e;white-space:pre;transform:scaleX(0.9719);transform-origin:0 0;">Details</span>
<span id="s_lnk" style="position:absolute;left:103px;top:677.4px;font:22px/1 'Liberation Sans',sans-serif;color:#cfcfcf;white-space:pre;transform:scaleX(0.9608);transform-origin:0 0;text-decoration:underline;text-underline-offset:2px;text-decoration-thickness:1.4px">app.js:95</span>
<div style="position:absolute;left:4px;top:714.4px;width:785px;height:1.4px;background:#414141"></div>
<span id="s_cs" style="position:absolute;left:18.4px;top:731.8px;font:22px/1 'Liberation Sans',sans-serif;color:#dadada;white-space:pre;transform:scaleX(1.0282);transform-origin:0 0;">Call Stacks</span>
<div style="position:absolute;left:789px;top:544px;width:15px;height:197px;background:#fafafa;border-left:1px solid #e6e6e6;box-sizing:border-box"></div>
<div style="position:absolute;left:793px;top:547.5px;width:8.5px;height:111.5px;background:#c1c1c1;border-radius:4.5px"></div>
</div></div>
</body></html>
